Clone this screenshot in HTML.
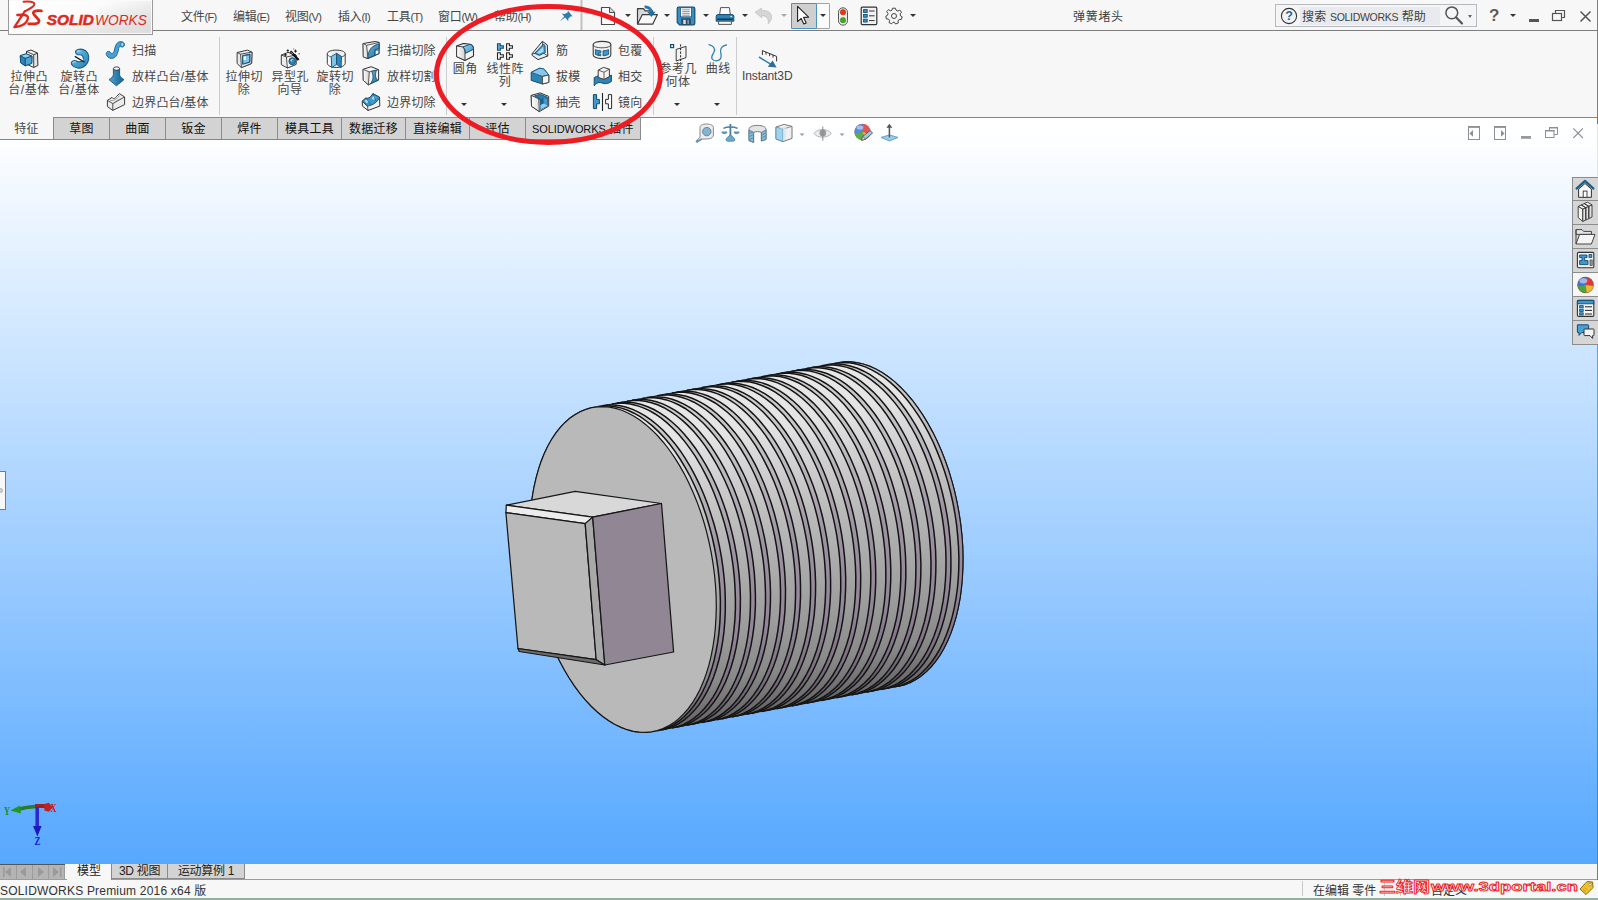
<!DOCTYPE html>
<html lang="zh-CN">
<head>
<meta charset="utf-8">
<title>SOLIDWORKS Premium 2016 x64 版 - 弹簧堵头</title>
<style>
*{box-sizing:border-box;margin:0;padding:0}
html,body{width:1598px;height:900px;overflow:hidden;background:#f7f7f7}
body{position:relative;font-family:"Liberation Sans","Noto Sans CJK SC",sans-serif;font-size:12px;color:#464646;line-height:13px}
.abs{position:absolute}
#menubar{position:absolute;left:0;top:0;width:1598px;height:31px;background:#f7f7f7;border-bottom:1px solid #7d7d7d}
#logo{position:absolute;left:8px;top:-1px;width:145px;height:36px;border:1px solid #9a9a9a;background:linear-gradient(160deg,#ffffff 0%,#fbfbfb 45%,#e2e2e2 80%,#dcdcdc 100%);z-index:3;box-shadow:inset 0 0 0 1px #fafafa}
.menu{position:absolute;top:11px;white-space:nowrap;font-size:12px;color:#464646;letter-spacing:-0.3px}
.menu .en{font-size:11px;letter-spacing:-0.6px}
#ribbon{position:absolute;left:0;top:31px;width:1598px;height:87px;background:#f7f7f7}
#ribline{position:absolute;left:53px;top:117px;width:1545px;height:1px;background:#858585}
.sep{position:absolute;top:37px;width:1px;height:78px;background:#cdcdcd}
.lbl{position:absolute;white-space:nowrap;color:#464646;font-size:12px;letter-spacing:.2px;margin-top:2px}
.big{position:absolute;text-align:center;color:#464646;font-size:12px;line-height:13px;letter-spacing:.5px;margin-top:1px;text-indent:.5px}
.dd{position:absolute;width:0;height:0;border-left:3px solid transparent;border-right:3px solid transparent;border-top:3px solid #333}
#tabs{position:absolute;left:0;top:117px;height:23px;width:641px;border-bottom:1px solid #858585}
.tab{position:absolute;top:0;height:22px;background:#d3d3d3;border-left:1px solid #8a8a8a;border-top:1px solid #8a8a8a;color:#111;text-align:center;line-height:22px;padding-top:0;font-size:12px;white-space:nowrap;letter-spacing:.3px}
.tab.act{background:#f7f7f7;border:none;color:#464646;height:22px;padding-top:1px}
#view{position:absolute;left:0;top:118px;width:1597px;height:746px;background:linear-gradient(180deg,#ffffff 0%,#fdfeff 3%,#56a8ff 100%)}
#btabs{position:absolute;left:0;top:864px;width:1597px;height:16px;background:#f4f4f4;border-bottom:1px solid #9c9c9c}
#status{position:absolute;left:0;top:880px;width:1598px;height:18px;background:#f7f7f7}
#deskb{position:absolute;left:0;top:898px;width:1598px;height:2px;background:#8fb09c}
</style>
</head>
<body>
<div id="menubar">
 <div id="logo">
  <svg width="143" height="34" viewBox="0 0 143 34" style="position:absolute;left:0;top:0">
   <g fill="none" stroke="#dc2a1e" stroke-linecap="round" stroke-linejoin="round">
    <path d="M14.600 1.700 C19 1.100 25.200 1.400 25.400 4 C25.600 6.600 20.400 9.200 15.800 11.400" stroke-width="2"/>
    <path d="M15.800 11.400 L5.400 27.200 C10.400 26.400 15.600 24.600 17.400 21.800 C18.800 19.600 19.400 17.400 18.400 16.200 C16.800 14.600 12.200 14.600 8.300 15" stroke-width="2.300"/>
    <path d="M32.400 10.800 C28.800 10.400 24.800 11 24.300 12.600 C23.800 14.400 28.400 17.600 29.800 20 C30.800 22 29.600 23.400 26 23.800 C23.600 24 21.200 24 19.600 23.900" stroke-width="2.800"/>
   </g>
   <text x="37.800" y="24.500" font-family="'Liberation Sans',sans-serif" font-size="14.600" font-weight="bold" font-style="italic" fill="#dc2a1e" stroke="#dc2a1e" stroke-width=".5" textLength="47" lengthAdjust="spacingAndGlyphs">SOLID</text>
   <text x="86.100" y="24.500" font-family="'Liberation Sans',sans-serif" font-size="14.600" font-style="italic" fill="#dc2a1e" textLength="51.800" lengthAdjust="spacingAndGlyphs">WORKS</text>
  </svg>
 </div>
 <div class="menu" style="left:181px">文件<span class="en">(F)</span></div>
 <div class="menu" style="left:233px">编辑<span class="en">(E)</span></div>
 <div class="menu" style="left:285px">视图<span class="en">(V)</span></div>
 <div class="menu" style="left:338px">插入<span class="en">(I)</span></div>
 <div class="menu" style="left:387px">工具<span class="en">(T)</span></div>
 <div class="menu" style="left:438px">窗口<span class="en">(W)</span></div>
 <div class="menu" style="left:494px">帮助<span class="en">(H)</span></div>
 <!-- pin -->
 <svg class="abs" style="left:559px;top:9px" width="15" height="15" viewBox="0 0 15 15"><path d="M8.2 1.6 L13.4 6.4 L11.4 6.9 L9.6 9.6 L9.9 12 L6.3 8.8 L1.6 13.2 L5.2 7.8 L2.6 5.2 L5.2 5.4 L7.8 3.6 Z" fill="#2e7eb0" transform="rotate(8 7.5 7.5)"/></svg>
 <!-- grip separator -->
 <div class="abs" style="left:580px;top:0;width:3px;height:30px;background:linear-gradient(90deg,#e9e9e9,#b9b9b9 60%,#f7f7f7)"></div>
 <!-- new -->
 <svg class="abs" style="left:599px;top:6px" width="18" height="20" viewBox="0 0 18 20"><path d="M2.5 1.5 H10.5 L15.5 6.5 V18.5 H2.5 Z" fill="#fdfdfd" stroke="#4a4a4a" stroke-width="1.2" stroke-linejoin="round"/><path d="M10.5 1.5 V6.5 H15.5" fill="#dcdcdc" stroke="#4a4a4a" stroke-width="1"/></svg>
 <div class="dd" style="left:625px;top:14px"></div>
 <!-- open -->
 <svg class="abs" style="left:636px;top:5px" width="23" height="21" viewBox="0 0 23 21"><defs><linearGradient id="go1" x1="0" y1="0" x2="1" y2="1"><stop offset="0" stop-color="#cfcfcf"/><stop offset="1" stop-color="#f4f4f4"/></linearGradient></defs><path d="M1.500 3.600 H7.400 L9.200 5.800 H16.600 V19 H1.500 Z" fill="url(#go1)" stroke="#3c3c3c" stroke-width="1.200" stroke-linejoin="round"/><path d="M1.600 19 L6.400 9.600 H21.400 L16.800 19 Z" fill="#f9f9f9" stroke="#3c3c3c" stroke-width="1.200" stroke-linejoin="round"/><path d="M8.600 2 C12.600 1.600 15.400 4 15.400 7.600" fill="none" stroke="#2a79ab" stroke-width="3"/><path d="M11.200 6.800 H19.600 L15.400 12 Z" fill="#256f9e"/></svg>
 <div class="dd" style="left:664px;top:14px"></div>
 <!-- save -->
 <svg class="abs" style="left:676px;top:6px" width="20" height="20" viewBox="0 0 20 20"><path d="M1.200 2.800 Q1.200 1.200 2.800 1.200 H17.200 Q18.800 1.200 18.800 2.800 V17.200 Q18.800 18.800 17.200 18.800 H3.600 L1.200 16.400 Z" fill="#3a8fc2" stroke="#134d73" stroke-width="1.200"/><rect x="4.600" y="1.800" width="10.800" height="9" fill="#ffffff" stroke="#134d73" stroke-width=".7"/><path d="M6.200 3.800 H13.800 M6.200 5.600 H13.800 M6.200 7.400 H13.800 M6.200 9.200 H13.800" stroke="#777" stroke-width=".8"/><rect x="5.600" y="12.800" width="9" height="5.800" fill="#3a4a55" stroke="#134d73" stroke-width=".6"/><rect x="7.200" y="13.800" width="2.600" height="4.200" fill="#d5dde2"/><rect x="11.400" y="13.800" width="1.600" height="4.200" fill="#8a98a2"/></svg>
 <div class="dd" style="left:703px;top:14px"></div>
 <!-- print -->
 <svg class="abs" style="left:715px;top:6px" width="20" height="20" viewBox="0 0 20 20"><path d="M4.6 9 L5.6 1.6 H14.4 L15.4 9 Z" fill="#fbfbfb" stroke="#555" stroke-width="1"/><path d="M1.2 10.4 Q1.2 8.6 3 8.6 H17 Q18.8 8.6 18.8 10.4 V15.2 H1.2 Z" fill="#2f83b5" stroke="#134d73" stroke-width="1"/><rect x="2.2" y="12.4" width="15.6" height="1.6" fill="#0f4060"/><circle cx="16.2" cy="10.6" r=".8" fill="#eaf6ff"/><path d="M3.6 15.2 H16.4 V18.4 H3.6 Z" fill="#f6f6f6" stroke="#555" stroke-width="1"/></svg>
 <div class="dd" style="left:742px;top:14px"></div>
 <!-- undo (disabled) -->
 <svg class="abs" style="left:754px;top:7px" width="20" height="18" viewBox="0 0 20 18"><path d="M1 5.2 L7.4 1.2 L7.4 3.6 C13.6 2.6 18.6 6.4 17.4 11.6 C16.8 14 15.6 15.6 14 16.8 C15 13.4 14.4 9.4 7.6 8.4 L7.8 10.8 Z" fill="#d6d6d6" stroke="#c2c2c2" stroke-width=".8" stroke-linejoin="round"/></svg>
 <div class="dd" style="left:781px;top:14px;border-top-color:#a8a8a8"></div>
 <!-- select -->
 <div class="abs" style="left:791px;top:3px;width:39px;height:26px;border:1px solid #9fa4a8;background:#fbfbfb;border-radius:1px"></div>
 <div class="abs" style="left:791px;top:3px;width:26px;height:26px;border:1px solid #4b92c4;background:#cfcfcf;border-radius:1px"></div>
 <svg class="abs" style="left:796px;top:5px" width="15" height="21" viewBox="0 0 15 21"><path d="M1.6 1.4 L1.6 16.6 L5.2 13.4 L7.8 19 L10.2 17.9 L7.6 12.4 L12.6 12.2 Z" fill="#fff" stroke="#222" stroke-width="1.1" stroke-linejoin="round"/></svg>
 <div class="dd" style="left:820px;top:14px"></div>
 <!-- traffic light -->
 <svg class="abs" style="left:837px;top:7px" width="12" height="19" viewBox="0 0 12 19"><rect x="1.500" y=".8" width="9" height="17.400" rx="4.500" fill="#ececec" stroke="#555" stroke-width="1"/><circle cx="6" cy="5.200" r="2.700" fill="#f03410" stroke="#b02408" stroke-width=".5"/><circle cx="6" cy="13.200" r="2.700" fill="#3fae1c" stroke="#2a7a10" stroke-width=".5"/></svg>
 <!-- options list -->
 <svg class="abs" style="left:860px;top:6px" width="18" height="20" viewBox="0 0 18 20"><rect x="1.2" y="1.2" width="15.6" height="17.4" rx="1" fill="#f2f2f2" stroke="#333" stroke-width="1.2"/><g fill="#3b91c6" stroke="#134d73" stroke-width=".9"><rect x="3.6" y="3.6" width="3.6" height="2.8"/><rect x="3.6" y="8.4" width="3.6" height="2.8"/><rect x="3.6" y="13.2" width="3.6" height="2.8"/></g><path d="M9 5 H14.6 M9 9.8 H14.6 M9 14.6 H14.6" stroke="#333" stroke-width="1"/></svg>
 <!-- gear -->
 <svg class="abs" style="left:885px;top:7px" width="18" height="18" viewBox="-9 -9 18 18"><path id="gearp" d="M-1.5 -7.8 H1.5 L2 -5.8 L3.9 -4.9 L5.7 -6 L7.6 -3.6 L6.1 -2.2 L6.5 -0.2 L8.2 0.8 L7.2 3.6 L5.2 3.4 L3.9 5 L4.4 6.9 L1.6 8 L0.4 6.3 H-1 L-2.4 7.8 L-5 6.6 L-4.4 4.6 L-5.6 3 L-7.6 3 L-8.2 0.2 L-6.4 -0.8 L-6 -2.6 L-7.4 -4.2 L-5.4 -6.4 L-3.7 -5.2 L-2 -5.9 Z" fill="#f4f4f4" stroke="#444" stroke-width="1" stroke-linejoin="round"/><circle r="2.5" fill="#f7f7f7" stroke="#444" stroke-width="1"/></svg>
 <div class="dd" style="left:910px;top:14px"></div>
 <div class="abs" style="left:1073px;top:11px;white-space:nowrap;color:#3f3f3f;font-size:12px;letter-spacing:.7px">弹簧堵头</div>
 <!-- search -->
 <div class="abs" style="left:1275px;top:4px;width:202px;height:23px;border:1px solid #b5b9c0;background:#f5f5f6"></div>
 <div class="abs" style="left:1300px;top:7px;width:140px;height:18px;background:#e9eaee"></div>
 <svg class="abs" style="left:1280px;top:7px" width="18" height="18" viewBox="0 0 18 18"><circle cx="9" cy="9" r="7.6" fill="#f3f3f3" stroke="#333" stroke-width="1.1"/><text x="9" y="13.4" text-anchor="middle" font-family="'Liberation Sans',sans-serif" font-weight="bold" font-size="12.5" fill="#1b6a9c">?</text></svg>
 <div class="abs" style="left:1302px;top:11px;white-space:nowrap;color:#3f3f3f;font-size:12px;letter-spacing:.2px">搜索 <span style="font-size:10.500px;letter-spacing:-.3px">SOLIDWORKS</span> 帮助</div>
 <svg class="abs" style="left:1444px;top:5px" width="20" height="20" viewBox="0 0 20 20"><circle cx="7.8" cy="7.8" r="5.9" fill="none" stroke="#555" stroke-width="1.5"/><path d="M12.2 12.4 L18 18.4" stroke="#555" stroke-width="2.2" stroke-linecap="round"/></svg>
 <div class="dd" style="left:1468px;top:15px;border-top-color:#666;border-left-width:2.5px;border-right-width:2.5px"></div>
 <div class="abs" style="left:1489px;top:6px;font-size:17px;line-height:20px;font-weight:bold;color:#5c5c5c;font-family:'Liberation Sans',sans-serif">?</div>
 <div class="dd" style="left:1510px;top:14px"></div>
 <div class="abs" style="left:1529px;top:19px;width:10px;height:3px;background:#555"></div>
 <svg class="abs" style="left:1551px;top:9px" width="15" height="13" viewBox="0 0 15 13"><path d="M4.5 4 V1.5 H13.5 V8.5 H10.5" fill="none" stroke="#555" stroke-width="1.2"/><rect x="1.5" y="4.5" width="9" height="7" fill="none" stroke="#555" stroke-width="1.2"/></svg>
 <svg class="abs" style="left:1579px;top:10px" width="13" height="13" viewBox="0 0 13 13"><path d="M1.5 1.5 L11.5 11.5 M11.5 1.5 L1.5 11.5" stroke="#555" stroke-width="1.5"/></svg>
</div>
<div id="ribbon"></div><div id="ribline"></div>
<!-- big buttons group 1 -->
<svg class="abs" style="left:19px;top:49px" width="20" height="20" viewBox="0 0 20 20">
 <defs><linearGradient id="ge1" x1="0" y1="0" x2="1" y2="0"><stop offset="0" stop-color="#ffffff"/><stop offset="1" stop-color="#dcdcdc"/></linearGradient></defs>
 <path d="M7.500 2.400 L12 1 L18.500 4.100 L18.900 16.500 L14.700 18.500 L7.500 15 Z" fill="url(#ge1)" stroke="#333" stroke-width="1" stroke-linejoin="round"/>
 <path d="M7.500 2.400 L14.700 5.800 L18.500 4.100 M14.700 5.800 V18.500" fill="none" stroke="#333" stroke-width=".9"/>
 <path d="M1.300 6.700 L7.200 4.800 L13 7.200 L12.700 14.400 L6.100 16.800 L1.600 13.700 Z" fill="#3f97cb" stroke="#134d73" stroke-width="1" stroke-linejoin="round"/>
 <path d="M1.300 6.700 L7.200 4.800 L13 7.200 L6.100 9.400 Z" fill="#8fd0ee" stroke="#134d73" stroke-width=".8" stroke-linejoin="round"/>
 <path d="M6.100 9.400 L13 7.200 L12.700 14.400 L6.100 16.800 Z" fill="#4ea3d3" stroke="#134d73" stroke-width=".8" stroke-linejoin="round"/>
 <path d="M1.300 6.700 L6.100 9.400 L6.100 16.800 L1.600 13.700 Z" fill="#2f83b5" stroke="#134d73" stroke-width=".8" stroke-linejoin="round"/>
</svg>
<div class="big" style="left:4px;top:70px;width:50px">拉伸凸<br>台/基体</div>
<svg class="abs" style="left:69px;top:48px" width="22" height="22" viewBox="0 0 22 22">
 <defs><linearGradient id="gr1" x1="0" y1="0" x2="1" y2="1"><stop offset="0" stop-color="#86cbec"/><stop offset=".5" stop-color="#4aa3d3"/><stop offset="1" stop-color="#2676a8"/></linearGradient></defs>
 <path d="M7 2.600 C9 .8 13.600 .4 16.600 2.800 C20 5.600 20.800 10.800 18.400 15 C16 19.200 11.400 21.200 7 19.600 C4 18.600 1.800 16.400 2.400 14.600 C3 12.800 5.600 12 7.400 13 C9.400 14.200 12.200 14.200 13.400 12.200 C14.600 10.200 14 8 12.400 7 C10.800 6.200 9.600 7.200 8.200 6.400 C6.600 5.600 6 3.800 7 2.600 Z" fill="url(#gr1)" stroke="#1b5d88" stroke-width="1.100"/>
 <path d="M8.600 8 L14.400 11 L13.600 12.800 L7.600 9.600 Z" fill="#f4f9fc"/>
 <path d="M5.800 8.400 L15.600 14.200" stroke="#1c1c1c" stroke-width="1.300"/>
 <path d="M3.400 14.800 C4.400 13.600 6 13.600 7 14.400" fill="none" stroke="#bfe6f7" stroke-width=".9"/>
 <path d="M8 3.400 C9 2.600 10.400 2.600 11.400 3.400" fill="none" stroke="#c9ebf9" stroke-width=".9"/>
</svg>
<div class="big" style="left:54px;top:70px;width:50px">旋转凸<br>台/基体</div>
<!-- small column 1 -->
<svg class="abs" style="left:105px;top:40px" width="21" height="20" viewBox="0 0 21 20">
 <path d="M1.6 12.4 C2.6 11 4.6 11 5.6 12.6 C6.6 14.2 8.6 13.4 9.2 11 C10 7.6 10.6 3.6 13.4 2.2 C15.4 1.2 18.2 1.6 19.2 3.4 C20 5 19 7 17.2 7 C15.6 7 15 5.8 14.4 6.6 C13.2 8.4 13.4 13 11 16.2 C9 18.8 5.2 19 3 17 C1.4 15.6 0.8 13.6 1.6 12.4 Z" fill="#4aa0d0" stroke="#1b6a9c" stroke-width="1"/>
 <ellipse cx="17.3" cy="4.4" rx="1.7" ry="2.2" fill="#9bd7f2" stroke="#1b6a9c" stroke-width=".8"/>
</svg>
<div class="lbl" style="left:132px;top:43px">扫描</div>
<svg class="abs" style="left:108px;top:66px" width="17" height="21" viewBox="0 0 17 21">
 <defs><linearGradient id="gl1" x1="0" y1="0" x2="1" y2="0"><stop offset="0" stop-color="#5ba7d1"/><stop offset=".5" stop-color="#2f7fae"/><stop offset="1" stop-color="#1d608c"/></linearGradient></defs>
 <path d="M5.400 2.600 V8.600 C5.400 10.800 3 12.600 1 13.600 L8.400 19.800 L16 13.600 C14 12.600 11.600 10.800 11.600 8.600 V2.600 Z" fill="url(#gl1)" stroke="#1b5d88" stroke-width="1" stroke-linejoin="round"/>
 <ellipse cx="8.500" cy="2.600" rx="3.100" ry="1.700" fill="#f2f8fb" stroke="#333" stroke-width=".9"/>
</svg>
<div class="lbl" style="left:132px;top:69px">放样凸台/基体</div>
<svg class="abs" style="left:106px;top:92px" width="20" height="20" viewBox="0 0 20 20">
 <path d="M1.4 8.4 L6 5.4 C7 7 9 7 10.4 4.6 L13.4 1.6 L18.6 5 V12.6 L6.8 18.4 L1.4 14.6 Z" fill="#ececec" stroke="#3c3c3c" stroke-width="1" stroke-linejoin="round"/>
 <path d="M1.4 8.4 L6.8 11.6 L18.6 5 M6.8 11.6 V18.4" fill="none" stroke="#3c3c3c" stroke-width=".9"/>
 <path d="M4 8.2 C7 9.4 11 7.2 13.6 3.6 M9 10.2 C10.4 8.6 12.6 7.6 15.6 6.6" fill="none" stroke="#8a8a8a" stroke-width=".8"/>
</svg>
<div class="lbl" style="left:132px;top:95px">边界凸台/基体</div>
<div class="sep" style="left:219px"></div>
<!-- group 2 big -->
<svg class="abs" style="left:236px;top:49px" width="18" height="20" viewBox="0 0 18 20">
 <defs><linearGradient id="gc1" x1="0" y1="0" x2="1" y2="1"><stop offset="0" stop-color="#ffffff"/><stop offset="1" stop-color="#d6d6d6"/></linearGradient></defs>
 <path d="M1.100 3.500 L11.500 1.100 L16 3.100 L15.600 14.500 L5.400 18.600 L1.100 14.500 Z" fill="#e9e9e9" stroke="#3c3c3c" stroke-width="1" stroke-linejoin="round"/>
 <path d="M4.600 5.200 L16 3.100 L15.600 14.500 L5.400 18.600 Z" fill="url(#gc1)" stroke="#3c3c3c" stroke-width=".9" stroke-linejoin="round"/>
 <path d="M1.100 3.500 L4.600 5.200" stroke="#3c3c3c" stroke-width=".9"/>
 <path d="M6.400 6.600 L14.100 5 L14 13.200 L6.600 15.300 Z" fill="#2f83b5" stroke="#134d73" stroke-width=".9" stroke-linejoin="round"/>
 <path d="M7.400 7.600 L10.400 7 V11 L7.500 11.800 Z" fill="#f2f8fb"/>
 <path d="M7.500 11.800 L10.400 11 V7 L13 6.400 V12.600 L7.600 14.200 Z" fill="#86c6e6"/>
</svg>
<div class="big" style="left:219px;top:70px;width:50px">拉伸切<br>除</div>
<svg class="abs" style="left:280px;top:48px" width="21" height="21" viewBox="0 0 21 21">
 <path d="M1.300 7 L8 4.400 L16 7 L16 16.400 L7.400 20 L1.300 16.600 Z" fill="#ededed" stroke="#3c3c3c" stroke-width="1" stroke-linejoin="round"/>
 <path d="M6.400 9 L16 7 L16 16.400 L7.400 20 Z" fill="#f6f6f6" stroke="#3c3c3c" stroke-width=".9" stroke-linejoin="round"/>
 <path d="M1.300 7 L6.400 9" stroke="#3c3c3c" stroke-width=".9"/>
 <ellipse cx="12.200" cy="13.200" rx="3.300" ry="3.500" fill="#2f83b5" stroke="#134d73" stroke-width=".9"/><path d="M10.400 12.400 C11 11 12.800 10.800 13.800 11.600 C12.600 11.800 11.600 12.600 11.400 14 Z" fill="#bfe3f5"/>
 <path d="M10.400 3.400 L18.600 12" stroke="#111" stroke-width="2.400"/><path d="M11.200 4.400 L12.600 5.800" stroke="#fff" stroke-width=".9"/>
 <path d="M5.400 5.400 v3 M3.900 6.900 h3 M7.800 1.400 v2.400 M6.600 2.600 h2.400 M15.500 1.600 v3 M14 3.100 h3 M18.600 5.800 h1.200 M13.400 1 h.8" stroke="#111" stroke-width=".9"/>
</svg>
<div class="big" style="left:265px;top:70px;width:50px">异型孔<br>向导</div>
<svg class="abs" style="left:326px;top:49px" width="21" height="20" viewBox="0 0 21 20">
 <defs><linearGradient id="gv1" x1="0" y1="0" x2="1" y2="0"><stop offset="0" stop-color="#ffffff"/><stop offset=".5" stop-color="#e6e6e6"/><stop offset="1" stop-color="#fafafa"/></linearGradient></defs>
 <path d="M1.300 4.800 C1.300 2.600 5.200 1.100 10.200 1.100 C15.200 1.100 19.200 2.600 19.200 4.800 V14.400 C19.200 16.400 15.600 18.400 10.200 18.600 C5 18.400 1.300 16.400 1.300 14.400 Z" fill="url(#gv1)" stroke="#3c3c3c" stroke-width="1"/>
 <path d="M1.300 4.800 C1.300 6.400 3 7.400 5.300 8 M19.200 4.800 C19.200 6.400 17.600 7.400 15.500 8" fill="none" stroke="#3c3c3c" stroke-width=".8"/>
 <path d="M5.300 7.400 L10.600 4.400 L10.600 15.300 L5.700 18.800 Z" fill="#7fc4e6" stroke="#134d73" stroke-width=".9" stroke-linejoin="round"/>
 <path d="M10.600 4.400 L15.500 7.400 L15.100 18.800 L10.600 15.300 Z" fill="#3388ba" stroke="#134d73" stroke-width=".9" stroke-linejoin="round"/>
</svg>
<div class="big" style="left:310px;top:70px;width:50px">旋转切<br>除</div>
<!-- small column 2 -->
<svg class="abs" style="left:362px;top:40px" width="19" height="20" viewBox="0 0 19 20">
 <defs><linearGradient id="gs2" x1="0" y1="0" x2="1" y2="1"><stop offset="0" stop-color="#6fb6dc"/><stop offset="1" stop-color="#1f6b98"/></linearGradient><linearGradient id="gw2" x1="0" y1="0" x2="1" y2="0"><stop offset="0" stop-color="#ffffff"/><stop offset="1" stop-color="#cfcfcf"/></linearGradient></defs>
 <path d="M1.100 3.500 L13.100 1.500 L17.200 2.400 L17.100 13.700 L6 18.600 L1.300 16.900 Z" fill="#f4f4f4" stroke="#333" stroke-width="1" stroke-linejoin="round"/>
 <path d="M1.100 3.500 L4.600 5.300 L6 18.600 L1.300 16.900 Z" fill="url(#gw2)" stroke="#333" stroke-width=".8" stroke-linejoin="round"/>
 <path d="M4.600 5.300 L17.200 2.400" stroke="#333" stroke-width=".8"/>
 <path d="M6 18.200 C5.800 11 9.400 5.400 17.200 3.800 V8.800 L13 9.600 V15.400 Z" fill="url(#gs2)" stroke="#134d73" stroke-width=".9" stroke-linejoin="round"/>
 <path d="M13.200 10.600 L16.800 9.800 V13.600 L13.200 15 Z" fill="#f2f2f2" stroke="#134d73" stroke-width=".8" stroke-linejoin="round"/>
</svg>
<div class="lbl" style="left:387px;top:43px">扫描切除</div>
<svg class="abs" style="left:362px;top:66px" width="19" height="20" viewBox="0 0 19 20">
 <path d="M1.100 3.300 L9.100 .7 L16.600 3.700 L16.600 13.900 L6.400 18.800 L1.300 14.400 Z" fill="#f4f4f4" stroke="#333" stroke-width="1" stroke-linejoin="round"/>
 <path d="M1.100 3.300 L7.300 5.900 L6.400 18.800 L1.300 14.400 Z" fill="url(#gw2)" stroke="#333" stroke-width=".8" stroke-linejoin="round"/>
 <path d="M7.300 5.900 L16.600 3.700" stroke="#333" stroke-width=".8"/>
 <path d="M9.500 5.300 L14.400 4.200 C13.400 7 13.200 10 14 12 C14.600 13.400 15.600 14 16.400 14.200 L8.600 17.600 C9.800 16 10.800 14 11 11.600 C11.200 9.400 10.600 7 9.500 5.300 Z" fill="url(#gs2)" stroke="#134d73" stroke-width=".9" stroke-linejoin="round"/>
</svg>
<div class="lbl" style="left:387px;top:69px">放样切割</div>
<svg class="abs" style="left:361px;top:92px" width="21" height="20" viewBox="0 0 21 20">
 <path d="M1.200 9.200 L4.800 6.100 C7.200 7 9.600 5.600 11.900 1.700 L18.500 5.200 L18.800 14.100 L7 18.500 L1.400 14.100 Z" fill="#f0f0f0" stroke="#333" stroke-width="1" stroke-linejoin="round"/>
 <path d="M1.200 9.200 L4.800 6.100 C7.200 7 9.600 5.600 11.900 1.700 L18.500 5.200 C17 9.600 12 13.400 6.500 14.100 Z" fill="#3f97cb" stroke="#134d73" stroke-width=".9" stroke-linejoin="round"/>
 <path d="M3.400 8.800 L5.600 7.400 L8 9.600 L5.800 11.200 Z M12.200 3.800 L14.600 5 L13 8 L10.600 6.800 Z" fill="#a8def5"/>
 <path d="M4.800 6.100 L10 12.800 M11.900 1.700 L15.400 9.700" stroke="#134d73" stroke-width=".6" fill="none"/>
 <path d="M1.200 9.200 L6.500 14.100 L7 18.500" fill="none" stroke="#333" stroke-width=".8"/>
</svg>
<div class="lbl" style="left:387px;top:95px">边界切除</div>
<div class="sep" style="left:446px"></div>
<!-- fillet -->
<svg class="abs" style="left:456px;top:43px" width="19" height="19" viewBox="0 0 19 19">
 <defs><linearGradient id="gf1" x1="0" y1="0" x2="1" y2="0"><stop offset="0" stop-color="#fdfdfd"/><stop offset="1" stop-color="#d2d2d2"/></linearGradient><linearGradient id="gf2" x1="0" y1="0" x2="1" y2="1"><stop offset="0" stop-color="#9bd4ee"/><stop offset="1" stop-color="#3f93c4"/></linearGradient></defs>
 <path d="M.6 3 L7.5 .4 L14 1.300 C16.400 2 17.500 3.800 17.500 6 V13 L9 17.500 L.6 13.500 Z" fill="#f4f4f4" stroke="#333" stroke-width="1.100" stroke-linejoin="round"/>
 <path d="M.6 3 L7 3.900 C8.400 5.600 9 8 9 10.500 V17.500 L.6 13.500 Z" fill="url(#gf1)" stroke="#333" stroke-width=".9" stroke-linejoin="round"/>
 <path d="M7 3.900 L14 1.300 C16.400 2 17.500 3.800 17.500 6.200 L9.600 10.300 C9.400 7.600 8.600 5.400 7 3.900 Z" fill="url(#gf2)" stroke="#134d73" stroke-width="1" stroke-linejoin="round"/>
</svg>
<div class="big" style="left:440px;top:62px;width:50px">圆角</div>
<div class="dd" style="left:461px;top:103px"></div>
<!-- linear pattern -->
<svg class="abs" style="left:496px;top:42px" width="18" height="19" viewBox="0 0 18 19">
 <path d="M1.500 1.700 H4.300 V3.700 H7.300 V6.300 H4.300 V8.300 H1.500 Z" fill="#5fb0da" stroke="#134d73" stroke-width="1.100"/>
 <path d="M10.600 1.700 H13.400 V3.700 H16.400 V6.300 H13.400 V8.300 H10.600 Z M1.500 10.700 H4.300 V12.700 H7.300 V15.300 H4.300 V17.300 H1.500 Z M10.600 10.700 H13.400 V12.700 H16.400 V15.300 H13.400 V17.300 H10.600 Z" fill="#fdfdfd" stroke="#222" stroke-width="1.100"/>
</svg>
<div class="big" style="left:480px;top:62px;width:50px">线性阵<br>列</div>
<div class="dd" style="left:501px;top:103px"></div>
<!-- rib -->
<svg class="abs" style="left:531px;top:40px" width="18" height="21" viewBox="0 0 18 21">
 <path d="M1 13.800 L11.400 1.300 L16.300 4.900 L16.800 16 L7 19.600 L1.200 15.400 Z" fill="#ececec" stroke="#333" stroke-width="1" stroke-linejoin="round"/>
 <path d="M11.400 1.300 L11.800 12.600 L16.800 16 M11.800 12.600 L1 13.800" fill="none" stroke="#333" stroke-width=".8"/>
 <path d="M12.400 4.200 L14 5.400 L14.200 12.600 L8.400 15.400 L3.600 13.400 Z" fill="#3f97cb" stroke="#134d73" stroke-width=".9" stroke-linejoin="round"/>
 <path d="M12.200 6.800 L12.600 11.800 L8.200 13.800 L5.800 12.900 Z" fill="#a8def5"/>
</svg>
<div class="lbl" style="left:556px;top:43px">筋</div>
<!-- draft -->
<svg class="abs" style="left:530px;top:67px" width="20" height="18" viewBox="0 0 20 18">
 <path d="M1.2 5.4 L9.6 1.2 L13.8 2 L18.8 8 V15.4 L12.4 17 L1.2 13.4 Z" fill="#2f83b5" stroke="#134d73" stroke-width="1" stroke-linejoin="round"/>
 <path d="M1.2 5.4 L9.6 1.2 L13.8 2 L18.8 8 L12.4 9.4 Z" fill="#86c8ea" stroke="#134d73" stroke-width=".8" stroke-linejoin="round"/>
 <path d="M12.4 9.4 L18.8 8 V15.4 L12.4 17 Z" fill="#f4f4f4" stroke="#3c3c3c" stroke-width=".9" stroke-linejoin="round"/>
</svg>
<div class="lbl" style="left:556px;top:69px">拔模</div>
<!-- shell -->
<svg class="abs" style="left:530px;top:92px" width="20" height="21" viewBox="0 0 20 21">
 <defs><linearGradient id="gh1" x1="0" y1="0" x2="1" y2="0"><stop offset="0" stop-color="#ffffff"/><stop offset="1" stop-color="#dedede"/></linearGradient></defs>
 <path d="M1.200 3.400 L10.200 .9 L18.700 4.400 L18.700 14.200 L9.300 19.600 L1.500 14.200 Z" fill="#fafafa" stroke="#333" stroke-width="1" stroke-linejoin="round"/>
 <path d="M4.600 3.800 L10.200 2.200 L17.400 5.200 L17.400 13.600 L10.600 17.600 L10.200 7.400 Z" fill="#2a79ab" stroke="#134d73" stroke-width=".9" stroke-linejoin="round"/>
 <path d="M10.200 7.400 L13.600 6 L13.800 11.600 L10.500 13 Z" fill="#1f5f88"/><path d="M13.600 6 L17.400 7.600 V13.600 L13.800 11.600 Z" fill="#3f97cb"/>
 <path d="M10.500 13 L13.800 11.600 L17.400 13.600 L10.600 17.600 Z" fill="#8fd0ee"/>
 <path d="M1.200 3.400 L8.800 6.800 L9.300 19.600 L1.500 14.200 Z" fill="url(#gh1)" stroke="#333" stroke-width=".9" stroke-linejoin="round"/>
 <path d="M8.800 6.800 L10.200 7.400" stroke="#333" stroke-width=".8"/>
</svg>
<div class="lbl" style="left:556px;top:95px">抽壳</div>
<!-- wrap -->
<svg class="abs" style="left:592px;top:40px" width="20" height="20" viewBox="0 0 20 20">
 <path d="M1.2 4.6 C1.2 2.6 5 1.4 10 1.4 C15 1.4 18.8 2.6 18.8 4.6 V15 C18.8 17 15 18.6 10 18.6 C5 18.6 1.2 17 1.2 15 Z" fill="#f2f2f2" stroke="#3c3c3c" stroke-width="1.1"/>
 <path d="M1.2 4.6 C1.2 6.6 5 7.8 10 7.8 C15 7.8 18.8 6.6 18.8 4.6" fill="none" stroke="#3c3c3c" stroke-width=".9"/>
 <path d="M3.4 9.6 C5 10.4 7 10.8 8.8 10.8 V13 H6.4 V14.2 H8.8 V15.8 C7 15.8 5 15.2 3.4 14.4 Z M11 10.8 C13 10.8 15 10.4 16.6 9.6 V14.4 C15 15.2 13 15.8 11 15.8 Z" fill="#3f97cb" stroke="#134d73" stroke-width=".8"/>
</svg>
<div class="lbl" style="left:618px;top:43px">包覆</div>
<!-- intersect -->
<svg class="abs" style="left:592px;top:66px" width="21" height="21" viewBox="0 0 21 21">
 <path d="M2.2 11.6 C5 9.6 8 9.6 10 10.6 C13 12 16.4 11.4 19.4 9 V15.4 C16.4 17.8 13 18.2 10 17 C7.6 16 5 16.4 3.4 18.6 L2.2 19.8 Z" fill="#2f83b5" stroke="#134d73" stroke-width="1" stroke-linejoin="round"/>
 <path d="M6.2 4.2 L11.4 1.4 L17.4 3.2 V10.6 L12 13.4 L6.2 11.4 Z" fill="#f3f3f3" stroke="#3c3c3c" stroke-width="1" stroke-linejoin="round"/>
 <path d="M6.2 4.2 L12 6.2 L17.4 3.2 M12 6.2 V13.4" fill="none" stroke="#3c3c3c" stroke-width=".8"/>
</svg>
<div class="lbl" style="left:618px;top:69px">相交</div>
<!-- mirror -->
<svg class="abs" style="left:592px;top:93px" width="21" height="18" viewBox="0 0 21 18">
 <path d="M1.4 1.6 H4.6 V6.4 H7.4 V10.8 H4.6 V15.6 H1.4 Z" fill="#3f97cb" stroke="#134d73" stroke-width="1"/>
 <path d="M19.6 1.6 H16.4 V6.4 H13.6 V10.8 H16.4 V15.6 H19.6 Z" fill="#fbfbfb" stroke="#2b2b2b" stroke-width="1"/>
 <path d="M10.5 0 V18" stroke="#222" stroke-width="1.1"/>
</svg>
<div class="lbl" style="left:618px;top:95px">镜向</div>
<div class="sep" style="left:653px"></div>
<!-- reference geometry -->
<svg class="abs" style="left:669px;top:42.500px" width="20" height="22" viewBox="0 0 20 22">
 <rect x="1.6" y="1.6" width="3" height="3" fill="#eaf6ff" stroke="#134d73" stroke-width="1.2"/>
 <path d="M7.2 6.4 L17 3.4 V14.6 L7.2 18 Z" fill="#f3f3f3" stroke="#3c3c3c" stroke-width="1" stroke-linejoin="round"/>
 <path d="M11.6 1.4 V20.6" stroke="#222" stroke-width="1" stroke-dasharray="2.2 1.4"/>
</svg>
<div class="big" style="left:653px;top:62px;width:50px">参考几<br>何体</div>
<div class="dd" style="left:674px;top:103px"></div>
<!-- curves -->
<svg class="abs" style="left:707px;top:43px" width="21" height="21" viewBox="0 0 21 21">
 <path d="M2 1.6 C6.4 2.6 8.6 5.6 7 9 C5.4 12.2 3.6 13.6 5.2 16 C7 18.6 12 18.4 13.6 15.6 C15 13.2 14 11.2 13.6 9 C13 5.6 15.4 2.6 19.4 2" fill="none" stroke="#2f83b5" stroke-width="1.3" stroke-linecap="round"/>
</svg>
<div class="big" style="left:693px;top:62px;width:50px">曲线</div>
<div class="dd" style="left:714px;top:103px"></div>
<div class="sep" style="left:736px"></div>
<!-- instant3d -->
<svg class="abs" style="left:757px;top:48px" width="22" height="22" viewBox="0 0 22 22">
 <path d="M5.4 2.6 L19.6 8.4 M5.4 2.6 V7 M9 4 V6.6 M12.6 5.6 V8.2 M16 7 V9.6 M19.6 8.4 V13.4" fill="none" stroke="#333" stroke-width="1"/>
 <path d="M2 9 L14.4 16.6" stroke="#2f83b5" stroke-width="1.6"/><path d="M19.6 19.6 L10.8 18.8 L15.6 12.6 Z" fill="#2a6f99"/>
</svg>
<div class="lbl" style="left:742px;top:68px;letter-spacing:-.1px;font-size:12px">Instant3D</div>
<div id="view"></div>
<div class="abs" style="left:1597px;top:0;width:1px;height:118px;background:#7d7d7d"></div>
<div class="abs" style="left:1597px;top:118px;width:1px;height:6px;background:#1585f0"></div>
<div class="abs" style="left:1597px;top:124px;width:1px;height:221px;background:#e4e4e4"></div>
<div class="abs" style="left:1597px;top:345px;width:1px;height:535px;background:linear-gradient(180deg,#35b4f4 0%,#35b4f4 40%,#3aaa28 50%,#3aaa28 100%)"></div>
<div id="tabs">
 <div class="tab act" style="left:0;width:53px">特征</div>
 <div class="tab" style="left:53px;width:56px">草图</div>
 <div class="tab" style="left:109px;width:56px">曲面</div>
 <div class="tab" style="left:165px;width:56px">钣金</div>
 <div class="tab" style="left:221px;width:56px">焊件</div>
 <div class="tab" style="left:277px;width:64px">模具工具</div>
 <div class="tab" style="left:341px;width:64px">数据迁移</div>
 <div class="tab" style="left:405px;width:64px">直接编辑</div>
 <div class="tab" style="left:469px;width:56px">评估</div>
 <div class="tab" style="left:525px;width:116px;border-right:1px solid #8a8a8a"><span style="font-size:11px;letter-spacing:-.1px">SOLIDWORKS</span> 插件</div>
</div>
<!-- heads-up view toolbar -->
<svg class="abs" style="left:694px;top:122px" width="210" height="24" viewBox="0 0 210 24">
 <!-- zoom to fit -->
 <g>
  <path d="M6 5.6 C6 3.2 8.6 2 12.4 2 C16.4 2 19.4 3.2 19.4 5.6 V13 C19.4 15.6 16.4 17 12.4 17 H8 L3 20.6 L2 19 L6 15.4 Z" fill="#ececec" stroke="#8a8a8a" stroke-width="1"/>
  <circle cx="12.8" cy="9.6" r="4.2" fill="#86b4cf" stroke="#5b879f" stroke-width="1"/>
  <path d="M2 19.8 L8 17" stroke="#5a9bc2" stroke-width="1.6"/>
 </g>
 <!-- scales -->
 <g transform="translate(27,0)" fill="#6ea9cc" stroke="#4a7f9f" stroke-width=".9">
  <path d="M9.4 2 V14" stroke-width="1.8"/><path d="M2.4 6.4 C6 4.6 12.8 4.6 16.6 6.4" fill="none" stroke-width="1.4"/>
  <path d="M.8 10 H6 C5.6 12.2 1.2 12.2 .8 10 Z M13 10 H18.2 C17.8 12.2 13.4 12.2 13 10 Z"/>
  <path d="M9.4 13 C7 14.6 5 16.4 5 18.2 C5 19.6 13.8 19.6 13.8 18.2 C13.8 16.4 11.8 14.6 9.4 13 Z"/>
 </g>
 <!-- section view -->
 <g transform="translate(54,0)">
  <path d="M1 7.4 C1 5 4 3.4 9.4 3.4 C14.8 3.4 18 5 18 7.4 V17.4 L13.4 19 V10.4 C12 9.4 7 9.4 5.6 10.4 V20.4 L1 18.6 Z" fill="#e4e4e4" stroke="#777" stroke-width="1" stroke-linejoin="round"/>
  <path d="M1 8 L5.6 10.4 V20.4 L1 18.6 Z M13.4 10.4 L18 8 V17.4 L13.4 19 Z" fill="#8bbbd6" stroke="#4f7f9c" stroke-width=".9"/>
  <path d="M1.6 11.6 L5 9.8 M1.6 14.6 L5 12.8 M1.6 17.6 L5 15.8 M14 13 L17.4 11 M14 16 L17.4 14" stroke="#4f7f9c" stroke-width=".8"/>
 </g>
 <!-- display style cube -->
 <g transform="translate(81,0)">
  <path d="M1 5 L9 2.4 L17 4.4 V16.4 L8 19.6 L1 17 Z" fill="#f1f1f1" stroke="#777" stroke-width="1" stroke-linejoin="round"/>
  <path d="M1 5 L8 7 V19.6 L1 17 Z" fill="#9fd3ee" stroke="#5b8fae" stroke-width=".8"/><path d="M8 7 L17 4.4" stroke="#777" stroke-width=".8"/>
  <path d="M4 6 L11 4.2 V17 L8 19.4 V7 Z" fill="#cfe9f7" opacity=".8"/>
 </g>
 <path d="M105.500 11.5 h5 l-2.500 2.600 z" fill="#9a9a9a"/>
 <!-- hide/show eye -->
 <g transform="translate(119,0)">
  <path d="M1 11.4 C4 6.4 14.6 6.4 18.4 11.4 C14.6 16.4 4 16.4 1 11.4 Z" fill="#ededed" stroke="#b5b5b5" stroke-width="1"/>
  <circle cx="9.8" cy="11" r="3.4" fill="#9a9a9a"/><path d="M9.8 4.6 V18.6" stroke="#8a8a8a" stroke-width="1"/>
 </g>
 <path d="M145.500 11.500 h5 l-2.500 2.600 z" fill="#9a9a9a"/>
 <!-- appearance ball -->
 <g transform="translate(159,0)">
  <circle cx="9.600" cy="10" r="8.200" fill="#e05656"/>
  <path d="M9.600 10 L9.600 1.800 A8.200 8.200 0 0 0 1.600 11.600 Z" fill="#4f8fe0"/>
  <path d="M9.600 10 L1.600 11.600 A8.200 8.200 0 0 0 13 17.400 Z" fill="#58b04a"/>
  <path d="M9.600 10 L13 17.400 A8.200 8.200 0 0 0 17.400 12.600 Z" fill="#e8c54a"/>
  <ellipse cx="7" cy="5.600" rx="3.400" ry="2.200" fill="#fff" opacity=".45"/>
  <path d="M8.400 18.200 L9.800 14.400 L17 8.600 L19.600 11 L12.400 17.200 Z" fill="#9cc9e6" stroke="#555" stroke-width=".9" stroke-linejoin="round"/><path d="M8.400 18.200 L9.800 14.400 L12.400 17.200 Z" fill="#f0e0c0" stroke="#555" stroke-width=".7"/>
 </g>
 <!-- view triad -->
 <g transform="translate(186,0)">
  <path d="M1 15.400 L9.400 13 L18 15.400 L9.400 19 Z" fill="#9ccbe6" stroke="#5a9bc2" stroke-width=".9"/>
  <path d="M9.400 15.400 V4" stroke="#555" stroke-width="1.500"/><path d="M6.400 5.800 L9.400 1.800 L12.400 5.800 Z" fill="#555"/>
 </g>
</svg>
<!-- doc window controls -->
<svg class="abs" style="left:1466px;top:126px" width="124" height="15" viewBox="0 0 124 15">
 <g fill="none" stroke="#8f8f8f" stroke-width="1">
  <rect x="2.500" y="1" width="11" height="12.500"/><rect x="28.500" y="1" width="11" height="12.500"/>
  <path d="M83.500 4.500 V1.500 H91.500 V8.500 H88"/><rect x="79.500" y="4.500" width="8.500" height="7"/>
  <path d="M107.300 2.400 L116.900 12 M116.900 2.400 L107.300 12" stroke-width="1.100"/>
 </g>
 <path d="M2 0 H14 V1.800 H2 Z M28 0 H40 V1.800 H28 Z M83 1 H92 V2.400 H83 Z M79 4 H88.500 V5.400 H79 Z" fill="#8f8f8f"/>
 <path d="M3.400 7.400 L7 4 V10.800 Z M38.600 7.400 L35 4 V10.800 Z" fill="#8f8f8f"/>
 <rect x="55" y="10" width="10" height="2.800" fill="#9a9a9a"/>
</svg>
<!-- left panel handle -->
<div class="abs" style="left:-1px;top:471px;width:7px;height:39px;background:#f7f7f7;border:1px solid #7a7a7a"></div>
<div class="abs" style="left:-2px;top:488px;width:5px;height:5px;border-radius:3px;background:#cfcfcf;border:1px solid #b0b0b0"></div>
<svg class="abs" style="left:0;top:0" width="1598" height="900" viewBox="0 0 1598 900">
<defs>
<linearGradient id="gb" gradientUnits="userSpaceOnUse" x1="715.7" y1="385.1" x2="775.6" y2="708.9"><stop offset="0" stop-color="#e8e8e8"/><stop offset=".15" stop-color="#e4e4e4"/><stop offset=".27" stop-color="#d2d2d2"/><stop offset=".45" stop-color="#b9b9b9"/><stop offset=".57" stop-color="#adadad"/><stop offset=".73" stop-color="#9d9d9d"/><stop offset=".88" stop-color="#8a8a8a"/><stop offset="1" stop-color="#666666"/></linearGradient>
<linearGradient id="gp" gradientUnits="userSpaceOnUse" x1="715.7" y1="385.1" x2="775.6" y2="708.9"><stop offset="0" stop-color="#d0d0d0"/><stop offset=".2" stop-color="#c4c2c6"/><stop offset=".36" stop-color="#b2acb5"/><stop offset=".5" stop-color="#9e93a3"/><stop offset=".75" stop-color="#94869a"/><stop offset=".9" stop-color="#7c7082"/><stop offset="1" stop-color="#5c5562"/></linearGradient>
</defs>
<path d="M593.0 407.5 L838.3 362.7 L844.4 361.9 L850.6 361.9 L856.8 362.6 L863.1 364.0 L869.5 366.1 L875.8 369.0 L882.1 372.5 L888.3 376.8 L894.5 381.6 L900.5 387.2 L906.4 393.3 L912.1 400.0 L917.6 407.3 L922.9 415.1 L927.9 423.4 L932.7 432.1 L937.2 441.3 L941.4 450.8 L945.3 460.7 L948.8 470.8 L951.9 481.2 L954.7 491.7 L957.1 502.5 L959.1 513.3 L960.7 524.1 L961.9 535.0 L962.7 545.8 L963.0 556.6 L962.9 567.1 L962.4 577.5 L961.5 587.7 L960.2 597.6 L958.4 607.1 L956.3 616.3 L953.7 625.1 L950.8 633.4 L947.5 641.2 L943.9 648.5 L939.9 655.3 L935.6 661.4 L931.0 667.0 L926.1 671.9 L920.9 676.2 L915.6 679.8 L910.0 682.7 L904.2 684.9 L898.3 686.3 L653.0 731.5 L653.0 731.5 L647.0 732.3 L641.0 732.3 L634.8 731.6 L628.6 730.1 L622.4 727.9 L616.2 725.1 L610.0 721.5 L603.8 717.3 L597.8 712.3 L591.8 706.8 L586.0 700.6 L580.4 693.9 L574.9 686.6 L569.7 678.8 L564.7 670.5 L560.0 661.7 L555.5 652.5 L551.4 643.0 L547.6 633.1 L544.1 623.0 L540.9 612.6 L538.1 602.0 L535.8 591.3 L533.7 580.4 L532.1 569.5 L530.9 558.7 L530.2 547.8 L529.8 537.1 L529.8 526.5 L530.3 516.1 L531.1 506.0 L532.4 496.1 L534.1 486.5 L536.2 477.4 L538.7 468.6 L541.5 460.3 L544.7 452.5 L548.3 445.2 L552.2 438.4 L556.4 432.2 L560.9 426.7 L565.7 421.8 L570.7 417.5 L576.0 414.0 L581.5 411.1 L587.2 408.9 L593.0 407.5 Z" fill="url(#gb)" stroke="#1a1a1a" stroke-width="1.1" stroke-linejoin="round"/>
<path d="M597.1 406.7 L603.1 406.0 L609.2 406.0 L615.3 406.7 L621.5 408.1 L627.8 410.3 L634.0 413.2 L640.2 416.7 L646.3 421.0 L652.4 425.9 L658.3 431.4 L664.1 437.6 L669.8 444.3 L675.2 451.6 L680.4 459.5 L685.4 467.8 L690.2 476.5 L694.6 485.7 L698.8 495.2 L702.6 505.1 L706.1 515.3 L709.2 525.7 L712.0 536.3 L714.4 547.0 L716.4 557.8 L718.0 568.7 L719.2 579.6 L720.0 590.4 L720.4 601.1 L720.3 611.7 L719.9 622.1 L719.0 632.3 L717.7 642.2 L716.0 651.7 L714.0 660.9 L711.5 669.6 L708.6 678.0 L705.4 685.8 L701.9 693.1 L698.0 699.8 L693.7 706.0 L689.2 711.5 L684.4 716.5 L679.4 720.7 L674.1 724.3 L668.6 727.2 L663.0 729.3 L657.1 730.8 L662.1 729.9 L667.9 728.4 L673.6 726.3 L679.0 723.4 L684.3 719.8 L689.4 715.5 L694.2 710.6 L698.7 705.1 L702.9 698.9 L706.8 692.2 L710.4 684.9 L713.6 677.0 L716.4 668.7 L718.9 660.0 L721.0 650.8 L722.7 641.2 L724.0 631.4 L724.8 621.2 L725.3 610.8 L725.3 600.2 L725.0 589.5 L724.2 578.7 L723.0 567.8 L721.4 556.9 L719.4 546.1 L717.0 535.3 L714.2 524.8 L711.0 514.4 L707.6 504.2 L703.7 494.3 L699.6 484.8 L695.1 475.6 L690.4 466.9 L685.4 458.6 L680.2 450.7 L674.7 443.4 L669.1 436.7 L663.3 430.5 L657.3 425.0 L651.3 420.1 L645.1 415.8 L638.9 412.3 L632.7 409.4 L626.5 407.2 L620.2 405.8 L614.1 405.1 L608.0 405.1 L602.0 405.8 Z" fill="url(#gp)" stroke="none"/>
<path d="M597.1 406.7 L603.1 406.0 L609.2 406.0 L615.3 406.7 L621.5 408.1 L627.8 410.3 L634.0 413.2 L640.2 416.7 L646.3 421.0 L652.4 425.9 L658.3 431.4 L664.1 437.6 L669.8 444.3 L675.2 451.6 L680.4 459.5 L685.4 467.8 L690.2 476.5 L694.6 485.7 L698.8 495.2 L702.6 505.1 L706.1 515.3 L709.2 525.7 L712.0 536.3 L714.4 547.0 L716.4 557.8 L718.0 568.7 L719.2 579.6 L720.0 590.4 L720.4 601.1 L720.3 611.7 L719.9 622.1 L719.0 632.3 L717.7 642.2 L716.0 651.7 L714.0 660.9 L711.5 669.6 L708.6 678.0 L705.4 685.8 L701.9 693.1 L698.0 699.8 L693.7 706.0 L689.2 711.5 L684.4 716.5 L679.4 720.7 L674.1 724.3 L668.6 727.2 L663.0 729.3 L657.1 730.8" fill="none" stroke="#141414" stroke-width="1.5"/>
<path d="M602.0 405.8 L608.0 405.1 L614.1 405.1 L620.2 405.8 L626.5 407.2 L632.7 409.4 L638.9 412.3 L645.1 415.8 L651.3 420.1 L657.3 425.0 L663.3 430.5 L669.1 436.7 L674.7 443.4 L680.2 450.7 L685.4 458.6 L690.4 466.9 L695.1 475.6 L699.6 484.8 L703.7 494.3 L707.6 504.2 L711.0 514.4 L714.2 524.8 L717.0 535.3 L719.4 546.1 L721.4 556.9 L723.0 567.8 L724.2 578.7 L725.0 589.5 L725.3 600.2 L725.3 610.8 L724.8 621.2 L724.0 631.4 L722.7 641.2 L721.0 650.8 L718.9 660.0 L716.4 668.7 L713.6 677.0 L710.4 684.9 L706.8 692.2 L702.9 698.9 L698.7 705.1 L694.2 710.6 L689.4 715.5 L684.3 719.8 L679.0 723.4 L673.6 726.3 L667.9 728.4 L662.1 729.9" fill="none" stroke="#141414" stroke-width="1.5"/>
<path d="M612.1 404.0 L618.1 403.2 L624.1 403.2 L630.3 404.0 L636.5 405.4 L642.7 407.6 L649.0 410.4 L655.2 414.0 L661.3 418.2 L667.4 423.1 L673.3 428.7 L679.1 434.8 L684.8 441.6 L690.2 448.9 L695.5 456.7 L700.5 465.0 L705.2 473.8 L709.7 482.9 L713.8 492.5 L717.6 502.4 L721.1 512.5 L724.3 522.9 L727.1 533.5 L729.5 544.2 L731.5 555.1 L733.1 565.9 L734.3 576.8 L735.0 587.6 L735.4 598.4 L735.4 609.0 L734.9 619.4 L734.0 629.5 L732.8 639.4 L731.1 648.9 L729.0 658.1 L726.5 666.9 L723.6 675.2 L720.4 683.0 L716.9 690.3 L713.0 697.1 L708.7 703.2 L704.2 708.8 L699.4 713.7 L694.4 717.9 L689.1 721.5 L683.6 724.4 L677.9 726.6 L672.1 728.0 L677.0 727.1 L682.8 725.7 L688.5 723.5 L694.0 720.6 L699.3 717.0 L704.4 712.8 L709.1 707.9 L713.7 702.3 L717.9 696.2 L721.8 689.4 L725.4 682.1 L728.6 674.3 L731.4 666.0 L733.9 657.2 L736.0 648.0 L737.7 638.5 L739.0 628.6 L739.9 618.4 L740.3 608.0 L740.4 597.5 L740.0 586.7 L739.2 575.9 L738.0 565.0 L736.4 554.1 L734.4 543.3 L732.0 532.6 L729.2 522.0 L726.1 511.6 L722.6 501.5 L718.8 491.6 L714.6 482.0 L710.2 472.9 L705.4 464.1 L700.4 455.8 L695.2 448.0 L689.7 440.7 L684.1 433.9 L678.3 427.8 L672.3 422.2 L666.3 417.3 L660.1 413.1 L653.9 409.5 L647.7 406.7 L641.4 404.5 L635.2 403.1 L629.1 402.3 L623.0 402.3 L617.0 403.1 Z" fill="url(#gp)" stroke="none"/>
<path d="M612.1 404.0 L618.1 403.2 L624.1 403.2 L630.3 404.0 L636.5 405.4 L642.7 407.6 L649.0 410.4 L655.2 414.0 L661.3 418.2 L667.4 423.1 L673.3 428.7 L679.1 434.8 L684.8 441.6 L690.2 448.9 L695.5 456.7 L700.5 465.0 L705.2 473.8 L709.7 482.9 L713.8 492.5 L717.6 502.4 L721.1 512.5 L724.3 522.9 L727.1 533.5 L729.5 544.2 L731.5 555.1 L733.1 565.9 L734.3 576.8 L735.0 587.6 L735.4 598.4 L735.4 609.0 L734.9 619.4 L734.0 629.5 L732.8 639.4 L731.1 648.9 L729.0 658.1 L726.5 666.9 L723.6 675.2 L720.4 683.0 L716.9 690.3 L713.0 697.1 L708.7 703.2 L704.2 708.8 L699.4 713.7 L694.4 717.9 L689.1 721.5 L683.6 724.4 L677.9 726.6 L672.1 728.0" fill="none" stroke="#141414" stroke-width="1.5"/>
<path d="M617.0 403.1 L623.0 402.3 L629.1 402.3 L635.2 403.1 L641.4 404.5 L647.7 406.7 L653.9 409.5 L660.1 413.1 L666.3 417.3 L672.3 422.2 L678.3 427.8 L684.1 433.9 L689.7 440.7 L695.2 448.0 L700.4 455.8 L705.4 464.1 L710.2 472.9 L714.6 482.0 L718.8 491.6 L722.6 501.5 L726.1 511.6 L729.2 522.0 L732.0 532.6 L734.4 543.3 L736.4 554.1 L738.0 565.0 L739.2 575.9 L740.0 586.7 L740.4 597.5 L740.3 608.0 L739.9 618.4 L739.0 628.6 L737.7 638.5 L736.0 648.0 L733.9 657.2 L731.4 666.0 L728.6 674.3 L725.4 682.1 L721.8 689.4 L717.9 696.2 L713.7 702.3 L709.1 707.9 L704.4 712.8 L699.3 717.0 L694.0 720.6 L688.5 723.5 L682.8 725.7 L677.0 727.1" fill="none" stroke="#141414" stroke-width="1.5"/>
<path d="M627.0 401.2 L633.0 400.5 L639.1 400.5 L645.3 401.2 L651.5 402.7 L657.7 404.8 L664.0 407.7 L670.2 411.3 L676.3 415.5 L682.4 420.4 L688.3 425.9 L694.2 432.1 L699.8 438.8 L705.3 446.1 L710.5 454.0 L715.5 462.3 L720.2 471.0 L724.7 480.2 L728.9 489.7 L732.7 499.6 L736.2 509.8 L739.3 520.1 L742.1 530.7 L744.5 541.5 L746.5 552.3 L748.1 563.2 L749.3 574.0 L750.1 584.9 L750.5 595.6 L750.4 606.2 L750.0 616.6 L749.1 626.7 L747.8 636.6 L746.1 646.2 L744.0 655.3 L741.5 664.1 L738.7 672.4 L735.4 680.3 L731.9 687.6 L728.0 694.3 L723.7 700.5 L719.2 706.0 L714.4 710.9 L709.3 715.2 L704.1 718.8 L698.6 721.6 L692.9 723.8 L687.0 725.3 L691.9 724.4 L697.8 722.9 L703.5 720.7 L709.0 717.9 L714.3 714.3 L719.3 710.0 L724.1 705.1 L728.7 699.6 L732.9 693.4 L736.8 686.6 L740.4 679.3 L743.6 671.5 L746.5 663.2 L748.9 654.4 L751.0 645.3 L752.7 635.7 L754.0 625.8 L754.9 615.7 L755.4 605.3 L755.4 594.7 L755.0 584.0 L754.3 573.1 L753.1 562.3 L751.5 551.4 L749.4 540.6 L747.1 529.8 L744.3 519.2 L741.1 508.8 L737.6 498.7 L733.8 488.8 L729.6 479.3 L725.2 470.1 L720.4 461.4 L715.4 453.1 L710.2 445.2 L704.7 437.9 L699.1 431.2 L693.3 425.0 L687.3 419.5 L681.3 414.6 L675.1 410.4 L668.9 406.8 L662.7 403.9 L656.4 401.8 L650.2 400.3 L644.0 399.6 L637.9 399.6 L632.0 400.3 Z" fill="url(#gp)" stroke="none"/>
<path d="M627.0 401.2 L633.0 400.5 L639.1 400.5 L645.3 401.2 L651.5 402.7 L657.7 404.8 L664.0 407.7 L670.2 411.3 L676.3 415.5 L682.4 420.4 L688.3 425.9 L694.2 432.1 L699.8 438.8 L705.3 446.1 L710.5 454.0 L715.5 462.3 L720.2 471.0 L724.7 480.2 L728.9 489.7 L732.7 499.6 L736.2 509.8 L739.3 520.1 L742.1 530.7 L744.5 541.5 L746.5 552.3 L748.1 563.2 L749.3 574.0 L750.1 584.9 L750.5 595.6 L750.4 606.2 L750.0 616.6 L749.1 626.7 L747.8 636.6 L746.1 646.2 L744.0 655.3 L741.5 664.1 L738.7 672.4 L735.4 680.3 L731.9 687.6 L728.0 694.3 L723.7 700.5 L719.2 706.0 L714.4 710.9 L709.3 715.2 L704.1 718.8 L698.6 721.6 L692.9 723.8 L687.0 725.3" fill="none" stroke="#141414" stroke-width="1.5"/>
<path d="M632.0 400.3 L637.9 399.6 L644.0 399.6 L650.2 400.3 L656.4 401.8 L662.7 403.9 L668.9 406.8 L675.1 410.4 L681.3 414.6 L687.3 419.5 L693.3 425.0 L699.1 431.2 L704.7 437.9 L710.2 445.2 L715.4 453.1 L720.4 461.4 L725.2 470.1 L729.6 479.3 L733.8 488.8 L737.6 498.7 L741.1 508.8 L744.3 519.2 L747.1 529.8 L749.4 540.6 L751.5 551.4 L753.1 562.3 L754.3 573.1 L755.0 584.0 L755.4 594.7 L755.4 605.3 L754.9 615.7 L754.0 625.8 L752.7 635.7 L751.0 645.3 L748.9 654.4 L746.5 663.2 L743.6 671.5 L740.4 679.3 L736.8 686.6 L732.9 693.4 L728.7 699.6 L724.1 705.1 L719.3 710.0 L714.3 714.3 L709.0 717.9 L703.5 720.7 L697.8 722.9 L691.9 724.4" fill="none" stroke="#141414" stroke-width="1.5"/>
<path d="M642.0 398.5 L648.0 397.8 L654.1 397.8 L660.2 398.5 L666.5 399.9 L672.7 402.1 L679.0 405.0 L685.2 408.5 L691.3 412.8 L697.4 417.7 L703.4 423.2 L709.2 429.4 L714.8 436.1 L720.3 443.4 L725.5 451.2 L730.5 459.5 L735.3 468.3 L739.7 477.4 L743.9 487.0 L747.7 496.8 L751.2 507.0 L754.4 517.4 L757.1 528.0 L759.5 538.7 L761.5 549.5 L763.2 560.4 L764.4 571.3 L765.1 582.1 L765.5 592.8 L765.5 603.4 L765.0 613.8 L764.1 624.0 L762.8 633.9 L761.1 643.4 L759.0 652.6 L756.5 661.3 L753.7 669.7 L750.4 677.5 L746.9 684.8 L742.9 691.5 L738.7 697.7 L734.2 703.3 L729.4 708.2 L724.3 712.4 L719.0 716.0 L713.5 718.9 L707.8 721.1 L702.0 722.5 L706.9 721.6 L712.7 720.2 L718.4 718.0 L724.0 715.1 L729.2 711.5 L734.3 707.3 L739.1 702.4 L743.7 696.8 L747.9 690.6 L751.8 683.9 L755.4 676.6 L758.6 668.8 L761.5 660.4 L764.0 651.7 L766.1 642.5 L767.8 632.9 L769.1 623.1 L769.9 612.9 L770.4 602.5 L770.5 591.9 L770.1 581.2 L769.3 570.4 L768.1 559.5 L766.5 548.6 L764.5 537.8 L762.1 527.1 L759.3 516.5 L756.2 506.1 L752.7 495.9 L748.8 486.1 L744.7 476.5 L740.2 467.4 L735.5 458.6 L730.5 450.3 L725.2 442.5 L719.8 435.2 L714.1 428.5 L708.3 422.3 L702.3 416.8 L696.3 411.9 L690.1 407.6 L683.9 404.1 L677.6 401.2 L671.4 399.0 L665.2 397.6 L659.0 396.9 L652.9 396.9 L646.9 397.6 Z" fill="url(#gp)" stroke="none"/>
<path d="M642.0 398.5 L648.0 397.8 L654.1 397.8 L660.2 398.5 L666.5 399.9 L672.7 402.1 L679.0 405.0 L685.2 408.5 L691.3 412.8 L697.4 417.7 L703.4 423.2 L709.2 429.4 L714.8 436.1 L720.3 443.4 L725.5 451.2 L730.5 459.5 L735.3 468.3 L739.7 477.4 L743.9 487.0 L747.7 496.8 L751.2 507.0 L754.4 517.4 L757.1 528.0 L759.5 538.7 L761.5 549.5 L763.2 560.4 L764.4 571.3 L765.1 582.1 L765.5 592.8 L765.5 603.4 L765.0 613.8 L764.1 624.0 L762.8 633.9 L761.1 643.4 L759.0 652.6 L756.5 661.3 L753.7 669.7 L750.4 677.5 L746.9 684.8 L742.9 691.5 L738.7 697.7 L734.2 703.3 L729.4 708.2 L724.3 712.4 L719.0 716.0 L713.5 718.9 L707.8 721.1 L702.0 722.5" fill="none" stroke="#141414" stroke-width="1.5"/>
<path d="M646.9 397.6 L652.9 396.9 L659.0 396.9 L665.2 397.6 L671.4 399.0 L677.6 401.2 L683.9 404.1 L690.1 407.6 L696.3 411.9 L702.3 416.8 L708.3 422.3 L714.1 428.5 L719.8 435.2 L725.2 442.5 L730.5 450.3 L735.5 458.6 L740.2 467.4 L744.7 476.5 L748.8 486.1 L752.7 495.9 L756.2 506.1 L759.3 516.5 L762.1 527.1 L764.5 537.8 L766.5 548.6 L768.1 559.5 L769.3 570.4 L770.1 581.2 L770.5 591.9 L770.4 602.5 L769.9 612.9 L769.1 623.1 L767.8 632.9 L766.1 642.5 L764.0 651.7 L761.5 660.4 L758.6 668.8 L755.4 676.6 L751.8 683.9 L747.9 690.6 L743.7 696.8 L739.1 702.4 L734.3 707.3 L729.2 711.5 L724.0 715.1 L718.4 718.0 L712.7 720.2 L706.9 721.6" fill="none" stroke="#141414" stroke-width="1.5"/>
<path d="M656.9 395.8 L662.9 395.0 L669.0 395.0 L675.2 395.8 L681.4 397.2 L687.7 399.4 L694.0 402.2 L700.2 405.8 L706.3 410.0 L712.4 414.9 L718.4 420.5 L724.2 426.6 L729.8 433.3 L735.3 440.6 L740.6 448.5 L745.6 456.8 L750.3 465.5 L754.8 474.7 L758.9 484.2 L762.8 494.1 L766.3 504.2 L769.4 514.6 L772.2 525.2 L774.6 535.9 L776.6 546.8 L778.2 557.6 L779.4 568.5 L780.2 579.3 L780.5 590.1 L780.5 600.7 L780.0 611.1 L779.1 621.2 L777.8 631.1 L776.1 640.6 L774.0 649.8 L771.6 658.6 L768.7 666.9 L765.4 674.7 L761.9 682.0 L757.9 688.8 L753.7 694.9 L749.2 700.5 L744.4 705.4 L739.3 709.7 L734.0 713.2 L728.5 716.1 L722.8 718.3 L716.9 719.8 L721.8 718.9 L727.7 717.4 L733.4 715.2 L738.9 712.3 L744.2 708.8 L749.3 704.5 L754.1 699.6 L758.6 694.0 L762.9 687.9 L766.8 681.1 L770.4 673.8 L773.6 666.0 L776.5 657.7 L779.0 648.9 L781.1 639.7 L782.8 630.2 L784.1 620.3 L785.0 610.2 L785.4 599.8 L785.5 589.2 L785.1 578.4 L784.3 567.6 L783.1 556.7 L781.5 545.9 L779.5 535.0 L777.1 524.3 L774.4 513.7 L771.2 503.3 L767.7 493.2 L763.9 483.3 L759.7 473.8 L755.3 464.6 L750.5 455.9 L745.5 447.6 L740.3 439.7 L734.8 432.4 L729.1 425.7 L723.3 419.6 L717.3 414.0 L711.3 409.1 L705.1 404.9 L698.9 401.3 L692.6 398.5 L686.4 396.3 L680.1 394.9 L674.0 394.1 L667.9 394.1 L661.9 394.9 Z" fill="url(#gp)" stroke="none"/>
<path d="M656.9 395.8 L662.9 395.0 L669.0 395.0 L675.2 395.8 L681.4 397.2 L687.7 399.4 L694.0 402.2 L700.2 405.8 L706.3 410.0 L712.4 414.9 L718.4 420.5 L724.2 426.6 L729.8 433.3 L735.3 440.6 L740.6 448.5 L745.6 456.8 L750.3 465.5 L754.8 474.7 L758.9 484.2 L762.8 494.1 L766.3 504.2 L769.4 514.6 L772.2 525.2 L774.6 535.9 L776.6 546.8 L778.2 557.6 L779.4 568.5 L780.2 579.3 L780.5 590.1 L780.5 600.7 L780.0 611.1 L779.1 621.2 L777.8 631.1 L776.1 640.6 L774.0 649.8 L771.6 658.6 L768.7 666.9 L765.4 674.7 L761.9 682.0 L757.9 688.8 L753.7 694.9 L749.2 700.5 L744.4 705.4 L739.3 709.7 L734.0 713.2 L728.5 716.1 L722.8 718.3 L716.9 719.8" fill="none" stroke="#141414" stroke-width="1.5"/>
<path d="M661.9 394.9 L667.9 394.1 L674.0 394.1 L680.1 394.9 L686.4 396.3 L692.6 398.5 L698.9 401.3 L705.1 404.9 L711.3 409.1 L717.3 414.0 L723.3 419.6 L729.1 425.7 L734.8 432.4 L740.3 439.7 L745.5 447.6 L750.5 455.9 L755.3 464.6 L759.7 473.8 L763.9 483.3 L767.7 493.2 L771.2 503.3 L774.4 513.7 L777.1 524.3 L779.5 535.0 L781.5 545.9 L783.1 556.7 L784.3 567.6 L785.1 578.4 L785.5 589.2 L785.4 599.8 L785.0 610.2 L784.1 620.3 L782.8 630.2 L781.1 639.7 L779.0 648.9 L776.5 657.7 L773.6 666.0 L770.4 673.8 L766.8 681.1 L762.9 687.9 L758.6 694.0 L754.1 699.6 L749.3 704.5 L744.2 708.8 L738.9 712.3 L733.4 715.2 L727.7 717.4 L721.8 718.9" fill="none" stroke="#141414" stroke-width="1.5"/>
<path d="M671.9 393.0 L677.9 392.3 L684.0 392.3 L690.2 393.0 L696.4 394.5 L702.7 396.6 L708.9 399.5 L715.2 403.0 L721.3 407.3 L727.4 412.2 L733.4 417.7 L739.2 423.9 L744.9 430.6 L750.3 437.9 L755.6 445.7 L760.6 454.0 L765.3 462.8 L769.8 471.9 L774.0 481.5 L777.8 491.3 L781.3 501.5 L784.5 511.9 L787.2 522.5 L789.6 533.2 L791.6 544.0 L793.2 554.9 L794.4 565.8 L795.2 576.6 L795.6 587.3 L795.5 597.9 L795.1 608.3 L794.2 618.5 L792.9 628.3 L791.2 637.9 L789.1 647.1 L786.6 655.8 L783.7 664.1 L780.5 672.0 L776.9 679.3 L772.9 686.0 L768.7 692.2 L764.2 697.7 L759.3 702.7 L754.3 706.9 L749.0 710.5 L743.4 713.4 L737.7 715.6 L731.9 717.0 L736.8 716.1 L742.7 714.6 L748.4 712.5 L753.9 709.6 L759.2 706.0 L764.3 701.7 L769.1 696.8 L773.6 691.3 L777.9 685.1 L781.8 678.4 L785.4 671.1 L788.6 663.2 L791.5 654.9 L794.0 646.1 L796.1 637.0 L797.8 627.4 L799.1 617.5 L800.0 607.4 L800.5 597.0 L800.5 586.4 L800.2 575.7 L799.4 564.8 L798.2 554.0 L796.6 543.1 L794.6 532.3 L792.2 521.5 L789.4 511.0 L786.3 500.6 L782.8 490.4 L778.9 480.6 L774.8 471.0 L770.3 461.9 L765.5 453.1 L760.5 444.8 L755.3 437.0 L749.8 429.7 L744.1 423.0 L738.3 416.8 L732.4 411.3 L726.3 406.4 L720.1 402.1 L713.9 398.6 L707.6 395.7 L701.3 393.6 L695.1 392.1 L688.9 391.4 L682.8 391.4 L676.8 392.1 Z" fill="url(#gp)" stroke="none"/>
<path d="M671.9 393.0 L677.9 392.3 L684.0 392.3 L690.2 393.0 L696.4 394.5 L702.7 396.6 L708.9 399.5 L715.2 403.0 L721.3 407.3 L727.4 412.2 L733.4 417.7 L739.2 423.9 L744.9 430.6 L750.3 437.9 L755.6 445.7 L760.6 454.0 L765.3 462.8 L769.8 471.9 L774.0 481.5 L777.8 491.3 L781.3 501.5 L784.5 511.9 L787.2 522.5 L789.6 533.2 L791.6 544.0 L793.2 554.9 L794.4 565.8 L795.2 576.6 L795.6 587.3 L795.5 597.9 L795.1 608.3 L794.2 618.5 L792.9 628.3 L791.2 637.9 L789.1 647.1 L786.6 655.8 L783.7 664.1 L780.5 672.0 L776.9 679.3 L772.9 686.0 L768.7 692.2 L764.2 697.7 L759.3 702.7 L754.3 706.9 L749.0 710.5 L743.4 713.4 L737.7 715.6 L731.9 717.0" fill="none" stroke="#141414" stroke-width="1.5"/>
<path d="M676.8 392.1 L682.8 391.4 L688.9 391.4 L695.1 392.1 L701.3 393.6 L707.6 395.7 L713.9 398.6 L720.1 402.1 L726.3 406.4 L732.4 411.3 L738.3 416.8 L744.1 423.0 L749.8 429.7 L755.3 437.0 L760.5 444.8 L765.5 453.1 L770.3 461.9 L774.8 471.0 L778.9 480.6 L782.8 490.4 L786.3 500.6 L789.4 511.0 L792.2 521.5 L794.6 532.3 L796.6 543.1 L798.2 554.0 L799.4 564.8 L800.2 575.7 L800.5 586.4 L800.5 597.0 L800.0 607.4 L799.1 617.5 L797.8 627.4 L796.1 637.0 L794.0 646.1 L791.5 654.9 L788.6 663.2 L785.4 671.1 L781.8 678.4 L777.9 685.1 L773.6 691.3 L769.1 696.8 L764.3 701.7 L759.2 706.0 L753.9 709.6 L748.4 712.5 L742.7 714.6 L736.8 716.1" fill="none" stroke="#141414" stroke-width="1.5"/>
<path d="M686.8 390.3 L692.9 389.6 L699.0 389.6 L705.2 390.3 L711.4 391.7 L717.7 393.9 L723.9 396.7 L730.2 400.3 L736.3 404.5 L742.4 409.4 L748.4 415.0 L754.2 421.1 L759.9 427.9 L765.4 435.1 L770.6 443.0 L775.6 451.3 L780.4 460.0 L784.9 469.2 L789.0 478.7 L792.9 488.6 L796.4 498.7 L799.5 509.1 L802.3 519.7 L804.7 530.4 L806.7 541.2 L808.3 552.1 L809.5 563.0 L810.3 573.8 L810.6 584.6 L810.6 595.1 L810.1 605.5 L809.2 615.7 L807.9 625.6 L806.2 635.1 L804.1 644.3 L801.6 653.1 L798.7 661.4 L795.5 669.2 L791.9 676.5 L787.9 683.3 L783.7 689.4 L779.1 695.0 L774.3 699.9 L769.2 704.2 L763.9 707.7 L758.4 710.6 L752.7 712.8 L746.8 714.3 L751.7 713.4 L757.6 711.9 L763.3 709.7 L768.9 706.8 L774.2 703.2 L779.3 699.0 L784.1 694.1 L788.6 688.5 L792.9 682.3 L796.8 675.6 L800.4 668.3 L803.6 660.5 L806.5 652.1 L809.0 643.4 L811.1 634.2 L812.8 624.7 L814.2 614.8 L815.0 604.6 L815.5 594.2 L815.6 583.6 L815.2 572.9 L814.4 562.1 L813.2 551.2 L811.6 540.3 L809.6 529.5 L807.2 518.8 L804.5 508.2 L801.3 497.8 L797.8 487.7 L794.0 477.8 L789.8 468.3 L785.3 459.1 L780.6 450.4 L775.6 442.1 L770.3 434.2 L764.8 427.0 L759.2 420.2 L753.3 414.1 L747.4 408.5 L741.3 403.6 L735.1 399.4 L728.9 395.8 L722.6 393.0 L716.3 390.8 L710.1 389.4 L703.9 388.7 L697.8 388.7 L691.8 389.4 Z" fill="url(#gp)" stroke="none"/>
<path d="M686.8 390.3 L692.9 389.6 L699.0 389.6 L705.2 390.3 L711.4 391.7 L717.7 393.9 L723.9 396.7 L730.2 400.3 L736.3 404.5 L742.4 409.4 L748.4 415.0 L754.2 421.1 L759.9 427.9 L765.4 435.1 L770.6 443.0 L775.6 451.3 L780.4 460.0 L784.9 469.2 L789.0 478.7 L792.9 488.6 L796.4 498.7 L799.5 509.1 L802.3 519.7 L804.7 530.4 L806.7 541.2 L808.3 552.1 L809.5 563.0 L810.3 573.8 L810.6 584.6 L810.6 595.1 L810.1 605.5 L809.2 615.7 L807.9 625.6 L806.2 635.1 L804.1 644.3 L801.6 653.1 L798.7 661.4 L795.5 669.2 L791.9 676.5 L787.9 683.3 L783.7 689.4 L779.1 695.0 L774.3 699.9 L769.2 704.2 L763.9 707.7 L758.4 710.6 L752.7 712.8 L746.8 714.3" fill="none" stroke="#141414" stroke-width="1.5"/>
<path d="M691.8 389.4 L697.8 388.7 L703.9 388.7 L710.1 389.4 L716.3 390.8 L722.6 393.0 L728.9 395.8 L735.1 399.4 L741.3 403.6 L747.4 408.5 L753.3 414.1 L759.2 420.2 L764.8 427.0 L770.3 434.2 L775.6 442.1 L780.6 450.4 L785.3 459.1 L789.8 468.3 L794.0 477.8 L797.8 487.7 L801.3 497.8 L804.5 508.2 L807.2 518.8 L809.6 529.5 L811.6 540.3 L813.2 551.2 L814.4 562.1 L815.2 572.9 L815.6 583.6 L815.5 594.2 L815.0 604.6 L814.2 614.8 L812.8 624.7 L811.1 634.2 L809.0 643.4 L806.5 652.1 L803.6 660.5 L800.4 668.3 L796.8 675.6 L792.9 682.3 L788.6 688.5 L784.1 694.1 L779.3 699.0 L774.2 703.2 L768.9 706.8 L763.3 709.7 L757.6 711.9 L751.7 713.4" fill="none" stroke="#141414" stroke-width="1.5"/>
<path d="M701.8 387.6 L707.8 386.8 L713.9 386.8 L720.1 387.5 L726.4 389.0 L732.7 391.1 L738.9 394.0 L745.2 397.6 L751.3 401.8 L757.4 406.7 L763.4 412.2 L769.2 418.4 L774.9 425.1 L780.4 432.4 L785.6 440.2 L790.7 448.5 L795.4 457.3 L799.9 466.4 L804.1 476.0 L807.9 485.8 L811.4 496.0 L814.6 506.4 L817.3 516.9 L819.7 527.7 L821.7 538.5 L823.3 549.4 L824.5 560.2 L825.3 571.1 L825.7 581.8 L825.6 592.4 L825.1 602.8 L824.2 612.9 L822.9 622.8 L821.2 632.3 L819.1 641.5 L816.6 650.3 L813.7 658.6 L810.5 666.4 L806.9 673.7 L802.9 680.5 L798.7 686.7 L794.1 692.2 L789.3 697.1 L784.2 701.4 L778.9 705.0 L773.4 707.9 L767.6 710.0 L761.8 711.5 L766.7 710.6 L772.6 709.1 L778.3 707.0 L783.8 704.1 L789.1 700.5 L794.2 696.2 L799.1 691.3 L803.6 685.8 L807.9 679.6 L811.8 672.8 L815.4 665.5 L818.7 657.7 L821.5 649.4 L824.0 640.6 L826.2 631.4 L827.9 621.9 L829.2 612.0 L830.1 601.9 L830.6 591.5 L830.6 580.9 L830.3 570.2 L829.5 559.3 L828.3 548.5 L826.7 537.6 L824.7 526.8 L822.3 516.0 L819.5 505.4 L816.4 495.1 L812.9 484.9 L809.0 475.1 L804.8 465.5 L800.4 456.4 L795.6 447.6 L790.6 439.3 L785.3 431.5 L779.9 424.2 L774.2 417.5 L768.3 411.3 L762.4 405.8 L756.3 400.9 L750.1 396.7 L743.9 393.1 L737.6 390.2 L731.3 388.1 L725.1 386.6 L718.9 385.9 L712.7 385.9 L706.7 386.7 Z" fill="url(#gp)" stroke="none"/>
<path d="M701.8 387.6 L707.8 386.8 L713.9 386.8 L720.1 387.5 L726.4 389.0 L732.7 391.1 L738.9 394.0 L745.2 397.6 L751.3 401.8 L757.4 406.7 L763.4 412.2 L769.2 418.4 L774.9 425.1 L780.4 432.4 L785.6 440.2 L790.7 448.5 L795.4 457.3 L799.9 466.4 L804.1 476.0 L807.9 485.8 L811.4 496.0 L814.6 506.4 L817.3 516.9 L819.7 527.7 L821.7 538.5 L823.3 549.4 L824.5 560.2 L825.3 571.1 L825.7 581.8 L825.6 592.4 L825.1 602.8 L824.2 612.9 L822.9 622.8 L821.2 632.3 L819.1 641.5 L816.6 650.3 L813.7 658.6 L810.5 666.4 L806.9 673.7 L802.9 680.5 L798.7 686.7 L794.1 692.2 L789.3 697.1 L784.2 701.4 L778.9 705.0 L773.4 707.9 L767.6 710.0 L761.8 711.5" fill="none" stroke="#141414" stroke-width="1.5"/>
<path d="M706.7 386.7 L712.7 385.9 L718.9 385.9 L725.1 386.6 L731.3 388.1 L737.6 390.2 L743.9 393.1 L750.1 396.7 L756.3 400.9 L762.4 405.8 L768.3 411.3 L774.2 417.5 L779.9 424.2 L785.3 431.5 L790.6 439.3 L795.6 447.6 L800.4 456.4 L804.8 465.5 L809.0 475.1 L812.9 484.9 L816.4 495.1 L819.5 505.4 L822.3 516.0 L824.7 526.8 L826.7 537.6 L828.3 548.5 L829.5 559.3 L830.3 570.2 L830.6 580.9 L830.6 591.5 L830.1 601.9 L829.2 612.0 L827.9 621.9 L826.2 631.4 L824.0 640.6 L821.5 649.4 L818.7 657.7 L815.4 665.5 L811.8 672.8 L807.9 679.6 L803.6 685.8 L799.1 691.3 L794.2 696.2 L789.1 700.5 L783.8 704.1 L778.3 707.0 L772.6 709.1 L766.7 710.6" fill="none" stroke="#141414" stroke-width="1.5"/>
<path d="M716.8 384.9 L722.8 384.1 L728.9 384.1 L735.1 384.8 L741.4 386.3 L747.6 388.4 L753.9 391.3 L760.2 394.8 L766.3 399.1 L772.4 403.9 L778.4 409.5 L784.3 415.6 L789.9 422.4 L795.4 429.6 L800.7 437.5 L805.7 445.8 L810.5 454.5 L814.9 463.7 L819.1 473.2 L822.9 483.1 L826.5 493.2 L829.6 503.6 L832.4 514.2 L834.8 524.9 L836.8 535.7 L838.4 546.6 L839.6 557.5 L840.4 568.3 L840.7 579.0 L840.7 589.6 L840.2 600.0 L839.3 610.2 L838.0 620.0 L836.2 629.6 L834.1 638.8 L831.6 647.5 L828.7 655.8 L825.5 663.7 L821.9 671.0 L817.9 677.7 L813.7 683.9 L809.1 689.5 L804.3 694.4 L799.2 698.6 L793.9 702.2 L788.3 705.1 L782.6 707.3 L776.7 708.7 L781.6 707.8 L787.5 706.4 L793.2 704.2 L798.8 701.3 L804.1 697.7 L809.2 693.5 L814.1 688.5 L818.6 683.0 L822.9 676.8 L826.8 670.1 L830.4 662.8 L833.7 654.9 L836.6 646.6 L839.1 637.9 L841.2 628.7 L842.9 619.1 L844.2 609.3 L845.1 599.1 L845.6 588.7 L845.7 578.1 L845.3 567.4 L844.5 556.6 L843.3 545.7 L841.7 534.8 L839.7 524.0 L837.3 513.3 L834.5 502.7 L831.4 492.3 L827.9 482.2 L824.0 472.3 L819.9 462.8 L815.4 453.6 L810.6 444.9 L805.6 436.6 L800.4 428.7 L794.9 421.5 L789.2 414.7 L783.4 408.6 L777.4 403.0 L771.3 398.2 L765.1 393.9 L758.8 390.4 L752.6 387.5 L746.3 385.4 L740.0 383.9 L733.8 383.2 L727.7 383.2 L721.7 384.0 Z" fill="url(#gp)" stroke="none"/>
<path d="M716.8 384.9 L722.8 384.1 L728.9 384.1 L735.1 384.8 L741.4 386.3 L747.6 388.4 L753.9 391.3 L760.2 394.8 L766.3 399.1 L772.4 403.9 L778.4 409.5 L784.3 415.6 L789.9 422.4 L795.4 429.6 L800.7 437.5 L805.7 445.8 L810.5 454.5 L814.9 463.7 L819.1 473.2 L822.9 483.1 L826.5 493.2 L829.6 503.6 L832.4 514.2 L834.8 524.9 L836.8 535.7 L838.4 546.6 L839.6 557.5 L840.4 568.3 L840.7 579.0 L840.7 589.6 L840.2 600.0 L839.3 610.2 L838.0 620.0 L836.2 629.6 L834.1 638.8 L831.6 647.5 L828.7 655.8 L825.5 663.7 L821.9 671.0 L817.9 677.7 L813.7 683.9 L809.1 689.5 L804.3 694.4 L799.2 698.6 L793.9 702.2 L788.3 705.1 L782.6 707.3 L776.7 708.7" fill="none" stroke="#141414" stroke-width="1.5"/>
<path d="M721.7 384.0 L727.7 383.2 L733.8 383.2 L740.0 383.9 L746.3 385.4 L752.6 387.5 L758.8 390.4 L765.1 393.9 L771.3 398.2 L777.4 403.0 L783.4 408.6 L789.2 414.7 L794.9 421.5 L800.4 428.7 L805.6 436.6 L810.6 444.9 L815.4 453.6 L819.9 462.8 L824.0 472.3 L827.9 482.2 L831.4 492.3 L834.5 502.7 L837.3 513.3 L839.7 524.0 L841.7 534.8 L843.3 545.7 L844.5 556.6 L845.3 567.4 L845.7 578.1 L845.6 588.7 L845.1 599.1 L844.2 609.3 L842.9 619.1 L841.2 628.7 L839.1 637.9 L836.6 646.6 L833.7 654.9 L830.4 662.8 L826.8 670.1 L822.9 676.8 L818.6 683.0 L814.1 688.5 L809.2 693.5 L804.1 697.7 L798.8 701.3 L793.2 704.2 L787.5 706.4 L781.6 707.8" fill="none" stroke="#141414" stroke-width="1.5"/>
<path d="M731.7 382.1 L737.7 381.4 L743.9 381.4 L750.1 382.1 L756.3 383.5 L762.6 385.7 L768.9 388.5 L775.2 392.1 L781.3 396.3 L787.4 401.2 L793.4 406.7 L799.3 412.9 L805.0 419.6 L810.4 426.9 L815.7 434.7 L820.7 443.0 L825.5 451.8 L830.0 460.9 L834.1 470.4 L838.0 480.3 L841.5 490.5 L844.6 500.8 L847.4 511.4 L849.8 522.1 L851.8 533.0 L853.4 543.8 L854.6 554.7 L855.4 565.5 L855.8 576.3 L855.7 586.8 L855.2 597.2 L854.3 607.4 L853.0 617.3 L851.3 626.8 L849.2 636.0 L846.6 644.8 L843.7 653.1 L840.5 660.9 L836.9 668.2 L832.9 675.0 L828.7 681.1 L824.1 686.7 L819.3 691.6 L814.2 695.9 L808.8 699.5 L803.3 702.3 L797.6 704.5 L791.7 706.0 L796.6 705.1 L802.5 703.6 L808.2 701.4 L813.8 698.6 L819.1 695.0 L824.2 690.7 L829.0 685.8 L833.6 680.2 L837.9 674.1 L841.8 667.3 L845.4 660.0 L848.7 652.2 L851.6 643.9 L854.1 635.1 L856.2 625.9 L857.9 616.4 L859.3 606.5 L860.2 596.3 L860.6 585.9 L860.7 575.4 L860.3 564.6 L859.6 553.8 L858.4 542.9 L856.8 532.1 L854.8 521.2 L852.4 510.5 L849.6 499.9 L846.4 489.5 L842.9 479.4 L839.1 469.5 L834.9 460.0 L830.4 450.8 L825.7 442.1 L820.6 433.8 L815.4 426.0 L809.9 418.7 L804.2 412.0 L798.4 405.8 L792.4 400.3 L786.3 395.4 L780.1 391.2 L773.8 387.6 L767.5 384.8 L761.3 382.6 L755.0 381.2 L748.8 380.5 L742.6 380.5 L736.6 381.2 Z" fill="url(#gp)" stroke="none"/>
<path d="M731.7 382.1 L737.7 381.4 L743.9 381.4 L750.1 382.1 L756.3 383.5 L762.6 385.7 L768.9 388.5 L775.2 392.1 L781.3 396.3 L787.4 401.2 L793.4 406.7 L799.3 412.9 L805.0 419.6 L810.4 426.9 L815.7 434.7 L820.7 443.0 L825.5 451.8 L830.0 460.9 L834.1 470.4 L838.0 480.3 L841.5 490.5 L844.6 500.8 L847.4 511.4 L849.8 522.1 L851.8 533.0 L853.4 543.8 L854.6 554.7 L855.4 565.5 L855.8 576.3 L855.7 586.8 L855.2 597.2 L854.3 607.4 L853.0 617.3 L851.3 626.8 L849.2 636.0 L846.6 644.8 L843.7 653.1 L840.5 660.9 L836.9 668.2 L832.9 675.0 L828.7 681.1 L824.1 686.7 L819.3 691.6 L814.2 695.9 L808.8 699.5 L803.3 702.3 L797.6 704.5 L791.7 706.0" fill="none" stroke="#141414" stroke-width="1.5"/>
<path d="M736.6 381.2 L742.6 380.5 L748.8 380.5 L755.0 381.2 L761.3 382.6 L767.5 384.8 L773.8 387.6 L780.1 391.2 L786.3 395.4 L792.4 400.3 L798.4 405.8 L804.2 412.0 L809.9 418.7 L815.4 426.0 L820.6 433.8 L825.7 442.1 L830.4 450.8 L834.9 460.0 L839.1 469.5 L842.9 479.4 L846.4 489.5 L849.6 499.9 L852.4 510.5 L854.8 521.2 L856.8 532.1 L858.4 542.9 L859.6 553.8 L860.3 564.6 L860.7 575.4 L860.6 585.9 L860.2 596.3 L859.3 606.5 L857.9 616.4 L856.2 625.9 L854.1 635.1 L851.6 643.9 L848.7 652.2 L845.4 660.0 L841.8 667.3 L837.9 674.1 L833.6 680.2 L829.0 685.8 L824.2 690.7 L819.1 695.0 L813.8 698.6 L808.2 701.4 L802.5 703.6 L796.6 705.1" fill="none" stroke="#141414" stroke-width="1.5"/>
<path d="M746.7 379.4 L752.7 378.7 L758.8 378.6 L765.0 379.3 L771.3 380.8 L777.6 382.9 L783.9 385.8 L790.1 389.3 L796.3 393.6 L802.5 398.5 L808.4 404.0 L814.3 410.1 L820.0 416.9 L825.5 424.1 L830.7 432.0 L835.8 440.3 L840.5 449.0 L845.0 458.2 L849.2 467.7 L853.0 477.6 L856.5 487.7 L859.7 498.1 L862.5 508.7 L864.9 519.4 L866.9 530.2 L868.5 541.1 L869.7 551.9 L870.4 562.8 L870.8 573.5 L870.7 584.1 L870.2 594.5 L869.3 604.6 L868.0 614.5 L866.3 624.1 L864.2 633.2 L861.7 642.0 L858.8 650.3 L855.5 658.1 L851.9 665.5 L847.9 672.2 L843.7 678.4 L839.1 683.9 L834.2 688.9 L829.1 693.1 L823.8 696.7 L818.2 699.6 L812.5 701.8 L806.6 703.2 L811.5 702.3 L817.4 700.9 L823.2 698.7 L828.7 695.8 L834.1 692.2 L839.2 687.9 L844.0 683.0 L848.6 677.5 L852.9 671.3 L856.8 664.5 L860.4 657.2 L863.7 649.4 L866.6 641.1 L869.1 632.3 L871.2 623.1 L873.0 613.6 L874.3 603.7 L875.2 593.6 L875.7 583.2 L875.7 572.6 L875.4 561.9 L874.6 551.0 L873.4 540.2 L871.8 529.3 L869.8 518.5 L867.4 507.8 L864.6 497.2 L861.5 486.8 L858.0 476.6 L854.1 466.8 L850.0 457.3 L845.5 448.1 L840.7 439.3 L835.7 431.1 L830.4 423.2 L824.9 416.0 L819.2 409.2 L813.4 403.1 L807.4 397.6 L801.3 392.7 L795.1 388.4 L788.8 384.9 L782.5 382.0 L776.2 379.9 L770.0 378.4 L763.7 377.7 L757.6 377.8 L751.6 378.5 Z" fill="url(#gp)" stroke="none"/>
<path d="M746.7 379.4 L752.7 378.7 L758.8 378.6 L765.0 379.3 L771.3 380.8 L777.6 382.9 L783.9 385.8 L790.1 389.3 L796.3 393.6 L802.5 398.5 L808.4 404.0 L814.3 410.1 L820.0 416.9 L825.5 424.1 L830.7 432.0 L835.8 440.3 L840.5 449.0 L845.0 458.2 L849.2 467.7 L853.0 477.6 L856.5 487.7 L859.7 498.1 L862.5 508.7 L864.9 519.4 L866.9 530.2 L868.5 541.1 L869.7 551.9 L870.4 562.8 L870.8 573.5 L870.7 584.1 L870.2 594.5 L869.3 604.6 L868.0 614.5 L866.3 624.1 L864.2 633.2 L861.7 642.0 L858.8 650.3 L855.5 658.1 L851.9 665.5 L847.9 672.2 L843.7 678.4 L839.1 683.9 L834.2 688.9 L829.1 693.1 L823.8 696.7 L818.2 699.6 L812.5 701.8 L806.6 703.2" fill="none" stroke="#141414" stroke-width="1.5"/>
<path d="M751.6 378.5 L757.6 377.8 L763.7 377.7 L770.0 378.4 L776.2 379.9 L782.5 382.0 L788.8 384.9 L795.1 388.4 L801.3 392.7 L807.4 397.6 L813.4 403.1 L819.2 409.2 L824.9 416.0 L830.4 423.2 L835.7 431.1 L840.7 439.3 L845.5 448.1 L850.0 457.3 L854.1 466.8 L858.0 476.6 L861.5 486.8 L864.6 497.2 L867.4 507.8 L869.8 518.5 L871.8 529.3 L873.4 540.2 L874.6 551.0 L875.4 561.9 L875.7 572.6 L875.7 583.2 L875.2 593.6 L874.3 603.7 L873.0 613.6 L871.2 623.1 L869.1 632.3 L866.6 641.1 L863.7 649.4 L860.4 657.2 L856.8 664.5 L852.9 671.3 L848.6 677.5 L844.0 683.0 L839.2 687.9 L834.1 692.2 L828.7 695.8 L823.2 698.7 L817.4 700.9 L811.5 702.3" fill="none" stroke="#141414" stroke-width="1.5"/>
<path d="M761.6 376.7 L767.6 375.9 L773.8 375.9 L780.0 376.6 L786.3 378.0 L792.6 380.2 L798.9 383.0 L805.1 386.6 L811.3 390.8 L817.5 395.7 L823.5 401.2 L829.3 407.4 L835.0 414.1 L840.5 421.4 L845.8 429.2 L850.8 437.5 L855.6 446.2 L860.0 455.4 L864.2 464.9 L868.1 474.8 L871.6 484.9 L874.7 495.3 L877.5 505.9 L879.9 516.6 L881.9 527.4 L883.5 538.3 L884.7 549.2 L885.5 560.0 L885.8 570.7 L885.8 581.3 L885.3 591.7 L884.4 601.9 L883.1 611.7 L881.3 621.3 L879.2 630.5 L876.7 639.2 L873.8 647.6 L870.5 655.4 L866.9 662.7 L862.9 669.4 L858.7 675.6 L854.1 681.2 L849.2 686.1 L844.1 690.4 L838.8 693.9 L833.2 696.8 L827.5 699.0 L821.6 700.5 L826.5 699.6 L832.4 698.1 L838.1 695.9 L843.7 693.0 L849.0 689.5 L854.2 685.2 L859.0 680.3 L863.6 674.7 L867.9 668.5 L871.8 661.8 L875.4 654.5 L878.7 646.6 L881.6 638.3 L884.1 629.6 L886.3 620.4 L888.0 610.8 L889.3 601.0 L890.2 590.8 L890.7 580.4 L890.8 569.8 L890.4 559.1 L889.7 548.3 L888.5 537.4 L886.9 526.5 L884.9 515.7 L882.5 505.0 L879.7 494.4 L876.5 484.0 L873.0 473.9 L869.2 464.0 L865.0 454.5 L860.5 445.3 L855.7 436.6 L850.7 428.3 L845.4 420.5 L839.9 413.2 L834.2 406.5 L828.4 400.3 L822.4 394.8 L816.3 389.9 L810.1 385.7 L803.8 382.1 L797.5 379.3 L791.2 377.1 L784.9 375.7 L778.7 375.0 L772.6 375.0 L766.5 375.8 Z" fill="url(#gp)" stroke="none"/>
<path d="M761.6 376.7 L767.6 375.9 L773.8 375.9 L780.0 376.6 L786.3 378.0 L792.6 380.2 L798.9 383.0 L805.1 386.6 L811.3 390.8 L817.5 395.7 L823.5 401.2 L829.3 407.4 L835.0 414.1 L840.5 421.4 L845.8 429.2 L850.8 437.5 L855.6 446.2 L860.0 455.4 L864.2 464.9 L868.1 474.8 L871.6 484.9 L874.7 495.3 L877.5 505.9 L879.9 516.6 L881.9 527.4 L883.5 538.3 L884.7 549.2 L885.5 560.0 L885.8 570.7 L885.8 581.3 L885.3 591.7 L884.4 601.9 L883.1 611.7 L881.3 621.3 L879.2 630.5 L876.7 639.2 L873.8 647.6 L870.5 655.4 L866.9 662.7 L862.9 669.4 L858.7 675.6 L854.1 681.2 L849.2 686.1 L844.1 690.4 L838.8 693.9 L833.2 696.8 L827.5 699.0 L821.6 700.5" fill="none" stroke="#141414" stroke-width="1.5"/>
<path d="M766.5 375.8 L772.6 375.0 L778.7 375.0 L784.9 375.7 L791.2 377.1 L797.5 379.3 L803.8 382.1 L810.1 385.7 L816.3 389.9 L822.4 394.8 L828.4 400.3 L834.2 406.5 L839.9 413.2 L845.4 420.5 L850.7 428.3 L855.7 436.6 L860.5 445.3 L865.0 454.5 L869.2 464.0 L873.0 473.9 L876.5 484.0 L879.7 494.4 L882.5 505.0 L884.9 515.7 L886.9 526.5 L888.5 537.4 L889.7 548.3 L890.4 559.1 L890.8 569.8 L890.7 580.4 L890.2 590.8 L889.3 601.0 L888.0 610.8 L886.3 620.4 L884.1 629.6 L881.6 638.3 L878.7 646.6 L875.4 654.5 L871.8 661.8 L867.9 668.5 L863.6 674.7 L859.0 680.3 L854.2 685.2 L849.0 689.5 L843.7 693.0 L838.1 695.9 L832.4 698.1 L826.5 699.6" fill="none" stroke="#141414" stroke-width="1.5"/>
<path d="M776.6 373.9 L782.6 373.2 L788.8 373.2 L795.0 373.9 L801.3 375.3 L807.6 377.5 L813.9 380.3 L820.1 383.9 L826.3 388.1 L832.5 393.0 L838.5 398.5 L844.3 404.6 L850.0 411.4 L855.5 418.7 L860.8 426.5 L865.8 434.8 L870.6 443.5 L875.1 452.7 L879.3 462.2 L883.1 472.0 L886.6 482.2 L889.8 492.6 L892.6 503.1 L895.0 513.9 L897.0 524.7 L898.6 535.6 L899.8 546.4 L900.5 557.2 L900.9 568.0 L900.8 578.6 L900.3 589.0 L899.4 599.1 L898.1 609.0 L896.4 618.5 L894.2 627.7 L891.7 636.5 L888.8 644.8 L885.5 652.6 L881.9 659.9 L877.9 666.7 L873.6 672.9 L869.1 678.4 L864.2 683.3 L859.1 687.6 L853.7 691.2 L848.2 694.1 L842.4 696.3 L836.5 697.7 L841.4 696.8 L847.3 695.4 L853.1 693.2 L858.7 690.3 L864.0 686.7 L869.1 682.4 L874.0 677.5 L878.6 671.9 L882.9 665.8 L886.8 659.0 L890.5 651.7 L893.7 643.9 L896.6 635.6 L899.2 626.8 L901.3 617.6 L903.0 608.1 L904.4 598.2 L905.3 588.0 L905.8 577.6 L905.8 567.1 L905.5 556.3 L904.7 545.5 L903.5 534.6 L901.9 523.8 L899.9 513.0 L897.5 502.2 L894.7 491.7 L891.6 481.3 L888.1 471.1 L884.2 461.3 L880.0 451.7 L875.5 442.6 L870.8 433.8 L865.7 425.6 L860.5 417.7 L855.0 410.5 L849.3 403.7 L843.4 397.6 L837.4 392.1 L831.3 387.2 L825.1 383.0 L818.8 379.4 L812.5 376.6 L806.2 374.4 L799.9 373.0 L793.7 372.3 L787.5 372.3 L781.5 373.0 Z" fill="url(#gp)" stroke="none"/>
<path d="M776.6 373.9 L782.6 373.2 L788.8 373.2 L795.0 373.9 L801.3 375.3 L807.6 377.5 L813.9 380.3 L820.1 383.9 L826.3 388.1 L832.5 393.0 L838.5 398.5 L844.3 404.6 L850.0 411.4 L855.5 418.7 L860.8 426.5 L865.8 434.8 L870.6 443.5 L875.1 452.7 L879.3 462.2 L883.1 472.0 L886.6 482.2 L889.8 492.6 L892.6 503.1 L895.0 513.9 L897.0 524.7 L898.6 535.6 L899.8 546.4 L900.5 557.2 L900.9 568.0 L900.8 578.6 L900.3 589.0 L899.4 599.1 L898.1 609.0 L896.4 618.5 L894.2 627.7 L891.7 636.5 L888.8 644.8 L885.5 652.6 L881.9 659.9 L877.9 666.7 L873.6 672.9 L869.1 678.4 L864.2 683.3 L859.1 687.6 L853.7 691.2 L848.2 694.1 L842.4 696.3 L836.5 697.7" fill="none" stroke="#141414" stroke-width="1.5"/>
<path d="M781.5 373.0 L787.5 372.3 L793.7 372.3 L799.9 373.0 L806.2 374.4 L812.5 376.6 L818.8 379.4 L825.1 383.0 L831.3 387.2 L837.4 392.1 L843.4 397.6 L849.3 403.7 L855.0 410.5 L860.5 417.7 L865.7 425.6 L870.8 433.8 L875.5 442.6 L880.0 451.7 L884.2 461.3 L888.1 471.1 L891.6 481.3 L894.7 491.7 L897.5 502.2 L899.9 513.0 L901.9 523.8 L903.5 534.6 L904.7 545.5 L905.5 556.3 L905.8 567.1 L905.8 577.6 L905.3 588.0 L904.4 598.2 L903.0 608.1 L901.3 617.6 L899.2 626.8 L896.6 635.6 L893.7 643.9 L890.5 651.7 L886.8 659.0 L882.9 665.8 L878.6 671.9 L874.0 677.5 L869.1 682.4 L864.0 686.7 L858.7 690.3 L853.1 693.2 L847.3 695.4 L841.4 696.8" fill="none" stroke="#141414" stroke-width="1.5"/>
<path d="M791.5 371.2 L797.6 370.5 L803.7 370.4 L810.0 371.1 L816.2 372.6 L822.6 374.7 L828.9 377.6 L835.1 381.1 L841.3 385.3 L847.5 390.2 L853.5 395.8 L859.3 401.9 L865.0 408.6 L870.5 415.9 L875.8 423.7 L880.9 432.0 L885.6 440.7 L890.1 449.9 L894.3 459.4 L898.2 469.3 L901.7 479.4 L904.8 489.8 L907.6 500.4 L910.0 511.1 L912.0 521.9 L913.6 532.8 L914.8 543.7 L915.6 554.5 L915.9 565.2 L915.8 575.8 L915.4 586.2 L914.4 596.3 L913.1 606.2 L911.4 615.8 L909.2 624.9 L906.7 633.7 L903.8 642.0 L900.5 649.9 L896.9 657.2 L892.9 663.9 L888.6 670.1 L884.1 675.7 L879.2 680.6 L874.1 684.8 L868.7 688.4 L863.1 691.3 L857.4 693.5 L851.5 695.0 L856.4 694.1 L862.3 692.6 L868.1 690.4 L873.6 687.5 L879.0 683.9 L884.1 679.7 L889.0 674.7 L893.6 669.2 L897.9 663.0 L901.8 656.3 L905.5 648.9 L908.7 641.1 L911.7 632.8 L914.2 624.0 L916.3 614.9 L918.1 605.3 L919.4 595.4 L920.3 585.3 L920.8 574.9 L920.9 564.3 L920.5 553.6 L919.7 542.8 L918.6 531.9 L917.0 521.0 L915.0 510.2 L912.6 499.5 L909.8 488.9 L906.6 478.5 L903.1 468.4 L899.3 458.5 L895.1 449.0 L890.6 439.8 L885.8 431.1 L880.8 422.8 L875.5 415.0 L870.0 407.7 L864.3 401.0 L858.4 394.9 L852.4 389.3 L846.3 384.4 L840.1 380.2 L833.8 376.7 L827.5 373.8 L821.2 371.7 L814.9 370.2 L808.6 369.5 L802.5 369.6 L796.4 370.3 Z" fill="url(#gp)" stroke="none"/>
<path d="M791.5 371.2 L797.6 370.5 L803.7 370.4 L810.0 371.1 L816.2 372.6 L822.6 374.7 L828.9 377.6 L835.1 381.1 L841.3 385.3 L847.5 390.2 L853.5 395.8 L859.3 401.9 L865.0 408.6 L870.5 415.9 L875.8 423.7 L880.9 432.0 L885.6 440.7 L890.1 449.9 L894.3 459.4 L898.2 469.3 L901.7 479.4 L904.8 489.8 L907.6 500.4 L910.0 511.1 L912.0 521.9 L913.6 532.8 L914.8 543.7 L915.6 554.5 L915.9 565.2 L915.8 575.8 L915.4 586.2 L914.4 596.3 L913.1 606.2 L911.4 615.8 L909.2 624.9 L906.7 633.7 L903.8 642.0 L900.5 649.9 L896.9 657.2 L892.9 663.9 L888.6 670.1 L884.1 675.7 L879.2 680.6 L874.1 684.8 L868.7 688.4 L863.1 691.3 L857.4 693.5 L851.5 695.0" fill="none" stroke="#141414" stroke-width="1.5"/>
<path d="M796.4 370.3 L802.5 369.6 L808.6 369.5 L814.9 370.2 L821.2 371.7 L827.5 373.8 L833.8 376.7 L840.1 380.2 L846.3 384.4 L852.4 389.3 L858.4 394.9 L864.3 401.0 L870.0 407.7 L875.5 415.0 L880.8 422.8 L885.8 431.1 L890.6 439.8 L895.1 449.0 L899.3 458.5 L903.1 468.4 L906.6 478.5 L909.8 488.9 L912.6 499.5 L915.0 510.2 L917.0 521.0 L918.6 531.9 L919.7 542.8 L920.5 553.6 L920.9 564.3 L920.8 574.9 L920.3 585.3 L919.4 595.4 L918.1 605.3 L916.3 614.9 L914.2 624.0 L911.7 632.8 L908.7 641.1 L905.5 648.9 L901.8 656.3 L897.9 663.0 L893.6 669.2 L889.0 674.7 L884.1 679.7 L879.0 683.9 L873.6 687.5 L868.1 690.4 L862.3 692.6 L856.4 694.1" fill="none" stroke="#141414" stroke-width="1.5"/>
<path d="M806.5 368.5 L812.5 367.7 L818.7 367.7 L824.9 368.4 L831.2 369.8 L837.5 372.0 L843.9 374.8 L850.1 378.4 L856.3 382.6 L862.5 387.5 L868.5 393.0 L874.4 399.2 L880.1 405.9 L885.6 413.2 L890.8 421.0 L895.9 429.2 L900.7 438.0 L905.2 447.1 L909.3 456.7 L913.2 466.5 L916.7 476.7 L919.9 487.0 L922.7 497.6 L925.1 508.3 L927.1 519.2 L928.7 530.0 L929.8 540.9 L930.6 551.7 L931.0 562.4 L930.9 573.0 L930.4 583.4 L929.5 593.6 L928.1 603.5 L926.4 613.0 L924.3 622.2 L921.7 630.9 L918.8 639.3 L915.5 647.1 L911.9 654.4 L907.9 661.2 L903.6 667.3 L899.0 672.9 L894.2 677.8 L889.0 682.1 L883.7 685.7 L878.1 688.6 L872.3 690.7 L866.4 692.2 L871.3 691.3 L877.3 689.8 L883.0 687.7 L888.6 684.8 L894.0 681.2 L899.1 676.9 L904.0 672.0 L908.6 666.4 L912.9 660.3 L916.8 653.5 L920.5 646.2 L923.8 638.4 L926.7 630.0 L929.2 621.3 L931.3 612.1 L933.1 602.5 L934.4 592.7 L935.3 582.5 L935.8 572.1 L935.9 561.5 L935.6 550.8 L934.8 540.0 L933.6 529.1 L932.0 518.3 L930.0 507.4 L927.6 496.7 L924.8 486.1 L921.7 475.8 L918.1 465.6 L914.3 455.8 L910.1 446.2 L905.6 437.1 L900.8 428.3 L895.8 420.1 L890.5 412.3 L885.0 405.0 L879.3 398.3 L873.4 392.1 L867.4 386.6 L861.3 381.7 L855.1 377.5 L848.8 373.9 L842.5 371.1 L836.1 368.9 L829.9 367.5 L823.6 366.8 L817.4 366.8 L811.4 367.6 Z" fill="url(#gp)" stroke="none"/>
<path d="M806.5 368.5 L812.5 367.7 L818.7 367.7 L824.9 368.4 L831.2 369.8 L837.5 372.0 L843.9 374.8 L850.1 378.4 L856.3 382.6 L862.5 387.5 L868.5 393.0 L874.4 399.2 L880.1 405.9 L885.6 413.2 L890.8 421.0 L895.9 429.2 L900.7 438.0 L905.2 447.1 L909.3 456.7 L913.2 466.5 L916.7 476.7 L919.9 487.0 L922.7 497.6 L925.1 508.3 L927.1 519.2 L928.7 530.0 L929.8 540.9 L930.6 551.7 L931.0 562.4 L930.9 573.0 L930.4 583.4 L929.5 593.6 L928.1 603.5 L926.4 613.0 L924.3 622.2 L921.7 630.9 L918.8 639.3 L915.5 647.1 L911.9 654.4 L907.9 661.2 L903.6 667.3 L899.0 672.9 L894.2 677.8 L889.0 682.1 L883.7 685.7 L878.1 688.6 L872.3 690.7 L866.4 692.2" fill="none" stroke="#141414" stroke-width="1.5"/>
<path d="M811.4 367.6 L817.4 366.8 L823.6 366.8 L829.9 367.5 L836.1 368.9 L842.5 371.1 L848.8 373.9 L855.1 377.5 L861.3 381.7 L867.4 386.6 L873.4 392.1 L879.3 398.3 L885.0 405.0 L890.5 412.3 L895.8 420.1 L900.8 428.3 L905.6 437.1 L910.1 446.2 L914.3 455.8 L918.1 465.6 L921.7 475.8 L924.8 486.1 L927.6 496.7 L930.0 507.4 L932.0 518.3 L933.6 529.1 L934.8 540.0 L935.6 550.8 L935.9 561.5 L935.8 572.1 L935.3 582.5 L934.4 592.7 L933.1 602.5 L931.3 612.1 L929.2 621.3 L926.7 630.0 L923.8 638.4 L920.5 646.2 L916.8 653.5 L912.9 660.3 L908.6 666.4 L904.0 672.0 L899.1 676.9 L894.0 681.2 L888.6 684.8 L883.0 687.7 L877.3 689.8 L871.3 691.3" fill="none" stroke="#141414" stroke-width="1.5"/>
<path d="M821.4 365.7 L827.5 365.0 L833.7 365.0 L839.9 365.7 L846.2 367.1 L852.5 369.2 L858.8 372.1 L865.1 375.6 L871.3 379.9 L877.5 384.8 L883.5 390.3 L889.4 396.4 L895.1 403.1 L900.6 410.4 L905.9 418.2 L910.9 426.5 L915.7 435.2 L920.2 444.4 L924.4 453.9 L928.2 463.8 L931.8 473.9 L934.9 484.3 L937.7 494.9 L940.1 505.6 L942.1 516.4 L943.7 527.3 L944.9 538.1 L945.7 549.0 L946.0 559.7 L945.9 570.3 L945.4 580.7 L944.5 590.8 L943.2 600.7 L941.4 610.2 L939.3 619.4 L936.7 628.2 L933.8 636.5 L930.5 644.3 L926.9 651.6 L922.9 658.4 L918.6 664.6 L914.0 670.1 L909.1 675.1 L904.0 679.3 L898.6 682.9 L893.1 685.8 L887.3 688.0 L881.4 689.5 L886.3 688.6 L892.2 687.1 L898.0 684.9 L903.6 682.0 L908.9 678.4 L914.1 674.1 L919.0 669.2 L923.6 663.7 L927.9 657.5 L931.8 650.7 L935.5 643.4 L938.8 635.6 L941.7 627.3 L944.2 618.5 L946.4 609.3 L948.1 599.8 L949.5 589.9 L950.4 579.8 L950.9 569.4 L950.9 558.8 L950.6 548.0 L949.8 537.2 L948.7 526.4 L947.1 515.5 L945.1 504.7 L942.7 494.0 L939.9 483.4 L936.7 473.0 L933.2 462.9 L929.3 453.0 L925.1 443.5 L920.7 434.3 L915.9 425.6 L910.8 417.3 L905.5 409.5 L900.0 402.2 L894.3 395.5 L888.4 389.4 L882.4 383.8 L876.3 379.0 L870.1 374.7 L863.8 371.2 L857.5 368.3 L851.1 366.2 L844.8 364.8 L838.6 364.1 L832.4 364.1 L826.3 364.8 Z" fill="url(#gp)" stroke="none"/>
<path d="M821.4 365.7 L827.5 365.0 L833.7 365.0 L839.9 365.7 L846.2 367.1 L852.5 369.2 L858.8 372.1 L865.1 375.6 L871.3 379.9 L877.5 384.8 L883.5 390.3 L889.4 396.4 L895.1 403.1 L900.6 410.4 L905.9 418.2 L910.9 426.5 L915.7 435.2 L920.2 444.4 L924.4 453.9 L928.2 463.8 L931.8 473.9 L934.9 484.3 L937.7 494.9 L940.1 505.6 L942.1 516.4 L943.7 527.3 L944.9 538.1 L945.7 549.0 L946.0 559.7 L945.9 570.3 L945.4 580.7 L944.5 590.8 L943.2 600.7 L941.4 610.2 L939.3 619.4 L936.7 628.2 L933.8 636.5 L930.5 644.3 L926.9 651.6 L922.9 658.4 L918.6 664.6 L914.0 670.1 L909.1 675.1 L904.0 679.3 L898.6 682.9 L893.1 685.8 L887.3 688.0 L881.4 689.5" fill="none" stroke="#141414" stroke-width="1.5"/>
<path d="M826.3 364.8 L832.4 364.1 L838.6 364.1 L844.8 364.8 L851.1 366.2 L857.5 368.3 L863.8 371.2 L870.1 374.7 L876.3 379.0 L882.4 383.8 L888.4 389.4 L894.3 395.5 L900.0 402.2 L905.5 409.5 L910.8 417.3 L915.9 425.6 L920.7 434.3 L925.1 443.5 L929.3 453.0 L933.2 462.9 L936.7 473.0 L939.9 483.4 L942.7 494.0 L945.1 504.7 L947.1 515.5 L948.7 526.4 L949.8 537.2 L950.6 548.0 L950.9 558.8 L950.9 569.4 L950.4 579.8 L949.5 589.9 L948.1 599.8 L946.4 609.3 L944.2 618.5 L941.7 627.3 L938.8 635.6 L935.5 643.4 L931.8 650.7 L927.9 657.5 L923.6 663.7 L919.0 669.2 L914.1 674.1 L908.9 678.4 L903.6 682.0 L898.0 684.9 L892.2 687.1 L886.3 688.6" fill="none" stroke="#141414" stroke-width="1.5"/>
<path d="M834.2 363.4 L840.3 362.7 L846.4 362.6 L852.7 363.3 L859.0 364.8 L865.3 366.9 L871.7 369.8 L877.9 373.3 L884.2 377.5 L890.3 382.4 L896.3 387.9 L902.2 394.1 L907.9 400.8 L913.4 408.1 L918.7 415.9 L923.8 424.1 L928.6 432.9 L933.1 442.0 L937.2 451.6 L941.1 461.4 L944.6 471.6 L947.8 481.9 L950.6 492.5 L953.0 503.2 L955.0 514.0 L956.6 524.9 L957.7 535.8 L958.5 546.6 L958.9 557.3 L958.8 567.9 L958.3 578.3 L957.4 588.5 L956.0 598.3 L954.3 607.9 L952.1 617.1 L949.6 625.8 L946.7 634.1 L943.4 642.0 L939.7 649.3 L935.7 656.0 L931.4 662.2 L926.8 667.8 L921.9 672.7 L916.8 677.0 L911.4 680.6 L905.8 683.4 L900.1 685.6 L894.1 687.1 L898.3 686.3 L904.2 684.9 L910.0 682.7 L915.6 679.8 L920.9 676.2 L926.1 671.9 L931.0 667.0 L935.6 661.4 L939.9 655.3 L943.9 648.5 L947.5 641.2 L950.8 633.4 L953.7 625.1 L956.3 616.3 L958.4 607.1 L960.2 597.6 L961.5 587.7 L962.4 577.5 L962.9 567.1 L963.0 556.6 L962.7 545.8 L961.9 535.0 L960.7 524.1 L959.1 513.3 L957.1 502.5 L954.7 491.7 L951.9 481.2 L948.8 470.8 L945.3 460.7 L941.4 450.8 L937.2 441.3 L932.7 432.1 L927.9 423.4 L922.9 415.1 L917.6 407.3 L912.1 400.0 L906.4 393.3 L900.5 387.2 L894.5 381.6 L888.3 376.8 L882.1 372.5 L875.8 369.0 L869.5 366.1 L863.1 364.0 L856.8 362.6 L850.6 361.9 L844.4 361.9 L838.3 362.7 Z" fill="url(#gp)" stroke="none"/>
<path d="M834.2 363.4 L840.3 362.7 L846.4 362.6 L852.7 363.3 L859.0 364.8 L865.3 366.9 L871.7 369.8 L877.9 373.3 L884.2 377.5 L890.3 382.4 L896.3 387.9 L902.2 394.1 L907.9 400.8 L913.4 408.1 L918.7 415.9 L923.8 424.1 L928.6 432.9 L933.1 442.0 L937.2 451.6 L941.1 461.4 L944.6 471.6 L947.8 481.9 L950.6 492.5 L953.0 503.2 L955.0 514.0 L956.6 524.9 L957.7 535.8 L958.5 546.6 L958.9 557.3 L958.8 567.9 L958.3 578.3 L957.4 588.5 L956.0 598.3 L954.3 607.9 L952.1 617.1 L949.6 625.8 L946.7 634.1 L943.4 642.0 L939.7 649.3 L935.7 656.0 L931.4 662.2 L926.8 667.8 L921.9 672.7 L916.8 677.0 L911.4 680.6 L905.8 683.4 L900.1 685.6 L894.1 687.1" fill="none" stroke="#141414" stroke-width="1.5"/>
<path d="M838.3 362.7 L844.4 361.9 L850.6 361.9 L856.8 362.6 L863.1 364.0 L869.5 366.1 L875.8 369.0 L882.1 372.5 L888.3 376.8 L894.5 381.6 L900.5 387.2 L906.4 393.3 L912.1 400.0 L917.6 407.3 L922.9 415.1 L927.9 423.4 L932.7 432.1 L937.2 441.3 L941.4 450.8 L945.3 460.7 L948.8 470.8 L951.9 481.2 L954.7 491.7 L957.1 502.5 L959.1 513.3 L960.7 524.1 L961.9 535.0 L962.7 545.8 L963.0 556.6 L962.9 567.1 L962.4 577.5 L961.5 587.7 L960.2 597.6 L958.4 607.1 L956.3 616.3 L953.7 625.1 L950.8 633.4 L947.5 641.2 L943.9 648.5 L939.9 655.3 L935.6 661.4 L931.0 667.0 L926.1 671.9 L920.9 676.2 L915.6 679.8 L910.0 682.7 L904.2 684.9 L898.3 686.3" fill="none" stroke="#161616" stroke-width="1.2"/>
<path d="M711.3 553.2 L713.1 563.9 L714.5 574.7 L715.5 585.4 L716.1 596.1 L716.3 606.7 L716.0 617.1 L715.4 627.2 L714.4 637.2 L712.9 646.8 L711.1 656.1 L708.9 665.1 L706.3 673.6 L703.4 681.6 L700.1 689.2 L696.4 696.2 L692.5 702.7 L688.2 708.6 L683.6 713.9 L678.8 718.6 L673.8 722.6 L668.5 725.9 L663.0 728.6 L657.3 730.5 L651.5 731.8 L645.6 732.3 L639.6 732.2 L633.5 731.3 L627.3 729.7 L621.2 727.4 L615.0 724.5 L608.9 720.8 L602.8 716.5 L596.8 711.5 L591.0 706.0 L585.3 699.8 L579.7 693.1 L574.4 685.8 L569.2 678.0 L564.3 669.7 L559.6 661.0 L555.2 651.9 L551.2 642.4 L547.4 632.6 L543.9 622.6 L540.8 612.3 L538.1 601.8 L535.7 591.2 L533.8 580.5 L532.2 569.7 L531.0 559.0 L530.2 548.2 L529.8 537.6 L529.8 527.1 L530.2 516.8 L531.1 506.8 L532.3 497.0 L533.9 487.5 L536.0 478.4 L538.4 469.6 L541.1 461.4 L544.3 453.5 L547.7 446.2 L551.5 439.5 L555.6 433.3 L560.1 427.7 L564.7 422.7 L569.7 418.3 L574.9 414.7 L580.2 411.7 L585.8 409.4 L591.5 407.7 L597.4 406.8 L603.4 406.7 L609.5 407.2 L615.6 408.4 L621.8 410.3 L627.9 413.0 L634.1 416.3 L640.2 420.3 L646.2 424.9 L652.1 430.2 L657.9 436.0 L663.5 442.5 L669.0 449.5 L674.3 457.1 L679.3 465.1 L684.1 473.6 L688.6 482.5 L692.8 491.8 L696.8 501.4 L700.4 511.3 L703.7 521.5 L706.6 531.9 L709.1 542.5 L711.3 553.2 Z" fill="#b9b9b9" stroke="#161616" stroke-width="1.2"/>
<path d="M506.3 505.2 L575.2 491.4 L661.5 503.5 L592.7 517.1 Z" fill="#d8d8d8" stroke="#161616" stroke-width="1.250" stroke-linejoin="round"/>
<path d="M506.3 505.2 L592.7 517.1 L585.2 523.6 L505.9 512.7 Z" fill="#ececec" stroke="#161616" stroke-width="1.250" stroke-linejoin="round"/>
<path d="M505.9 512.7 L585.2 523.6 L596.2 659.7 L518.0 648.5 Z" fill="#b9b9b9" stroke="#161616" stroke-width="1.250" stroke-linejoin="round"/>
<path d="M585.2 523.6 L592.7 517.1 L604.8 665.0 L596.2 659.7 Z" fill="#a8a8a8" stroke="#161616" stroke-width="1.250" stroke-linejoin="round"/>
<path d="M592.7 517.1 L661.5 503.5 L673.6 652.0 L604.8 665.0 Z" fill="#918794" stroke="#161616" stroke-width="1.250" stroke-linejoin="round"/>
<path d="M518.0 648.5 L596.2 659.7 L604.8 665.0 L519.2 651.5 Z" fill="#6c6c6c" stroke="#161616" stroke-width="1.250" stroke-linejoin="round"/>
</svg>
<!-- right task pane tabs -->
<div class="abs" style="left:1572px;top:177px;width:26px;height:168px;background:#d6d6d6;border:1px solid #8c8c8c;border-right:none"></div>
<div class="abs" style="left:1573px;top:272px;width:25px;height:24px;background:#f6f6f6"></div>
<div class="abs" style="left:1573px;top:200px;width:25px;height:1px;background:#8c8c8c"></div>
<div class="abs" style="left:1573px;top:224px;width:25px;height:1px;background:#8c8c8c"></div>
<div class="abs" style="left:1573px;top:248px;width:25px;height:1px;background:#8c8c8c"></div>
<div class="abs" style="left:1573px;top:272px;width:25px;height:1px;background:#8c8c8c"></div>
<div class="abs" style="left:1573px;top:296px;width:25px;height:1px;background:#8c8c8c"></div>
<div class="abs" style="left:1573px;top:320px;width:25px;height:1px;background:#8c8c8c"></div>
<svg class="abs" style="left:1574px;top:177px" width="22" height="168" viewBox="0 0 22 168">
 <!-- home -->
 <g transform="translate(0,1.500)"><path d="M2 10.600 L11 2.400 L20 10.600" fill="none" stroke="#1b5d88" stroke-width="2.200" stroke-linejoin="round"/>
 <path d="M4.600 10.600 L11 5 L17.400 10.600 V18.800 H4.600 Z" fill="#f7f7f7" stroke="#333" stroke-width="1"/><rect x="9.200" y="12.600" width="3.800" height="6.200" fill="#fff" stroke="#333" stroke-width=".9"/></g>
 <!-- library books -->
 <g transform="translate(0,24)" stroke="#333" stroke-width=".9" stroke-linejoin="round"><path d="M4.200 5.400 L8.800 8 V20.400 L4.200 16.600 Z" fill="#f4f4f4"/><path d="M8.800 8 L11.800 6.600 V19 L8.800 20.400 Z M11.800 6.600 L14.800 5.200 V17.600 L11.800 19 Z M14.800 5.200 L18 3.800 V16 L14.800 17.600 Z" fill="#e2e2e2"/><path d="M4.200 5.400 L8.800 8 L11.800 6.600 L7.200 4 Z M7.200 4 L11.800 6.600 L14.800 5.200 L10.200 2.600 Z M10.200 2.600 L14.800 5.200 L18 3.800 L13.400 1.200 Z" fill="#fafafa"/></g>
 <!-- folder -->
 <g transform="translate(0,48)"><path d="M2 4.600 H8 L9.600 6.400 H17.400 V9.400 H2 Z" fill="#e4e4e4" stroke="#444" stroke-width="1" stroke-linejoin="round"/><path d="M2 19 V4.600 M2 19 L5.600 9.400 H21 L17.400 19 Z" fill="#f5f5f5" stroke="#444" stroke-width="1" stroke-linejoin="round"/></g>
 <!-- view palette -->
 <g transform="translate(0,72)"><rect x="3.400" y="3.400" width="16.400" height="15.400" rx="1.200" fill="#f2f2f2" stroke="#333" stroke-width="1.100"/><path d="M5.600 6 H13 V8.600 H10.600 V11.600 H14 V15.600 H5.600 V11.600 H8 V8.600 H5.600 Z" fill="#3f97cb" stroke="#134d73" stroke-width=".9"/><rect x="15" y="5.600" width="2.800" height="2.800" fill="#3f97cb" stroke="#134d73" stroke-width=".8"/><rect x="16" y="11" width="2.200" height="5.600" fill="#9a9a9a" stroke="#444" stroke-width=".7"/></g>
 <!-- appearances ball -->
 <g transform="translate(0,96)"><circle cx="11.600" cy="12" r="8" fill="#d93a3a"/><path d="M11.600 12 L13 4.100 A8 8 0 0 0 3.700 13.400 Z" fill="#3d74d8"/><path d="M11.600 12 L3.700 13.400 A8 8 0 0 0 12.600 19.900 Z" fill="#49a83c"/><path d="M11.600 12 L12.600 19.900 A8 8 0 0 0 19.500 13 Z" fill="#e6b93a"/><ellipse cx="9.400" cy="7.800" rx="4" ry="2.600" fill="#fff" opacity=".5"/><circle cx="11.600" cy="12" r="8" fill="none" stroke="#6a4a3a" stroke-width=".6" opacity=".6"/></g>
 <!-- custom properties -->
 <g transform="translate(0,120)"><rect x="3.400" y="3.400" width="16.400" height="16" rx="1.200" fill="#f4f4f4" stroke="#333" stroke-width="1.100"/><rect x="3.400" y="3.400" width="16.400" height="3.400" fill="#3f97cb" stroke="#134d73" stroke-width=".9"/><g fill="#3f97cb" stroke="#134d73" stroke-width=".8"><rect x="5.600" y="8.600" width="3.600" height="2.200"/><rect x="5.600" y="12.200" width="3.600" height="2.200"/><rect x="5.600" y="15.800" width="3.600" height="2.200"/></g><path d="M11 9.800 H18 M11 13.400 H18 M11 17 H18" stroke="#222" stroke-width="1"/></g>
 <!-- forum -->
 <g transform="translate(0,144)"><path d="M3.400 3.800 H14 Q14.600 3.800 14.600 4.400 V11 Q14.600 11.600 14 11.600 H7.600 L5 14.400 V11.600 H4 Q3.400 11.600 3.400 11 Z" fill="#4aa0d0" stroke="#134d73" stroke-width="1" stroke-linejoin="round"/><path d="M10.600 8 H19.400 Q20 8 20 8.600 V14 Q20 14.600 19.400 14.600 H18.600 V17.400 L16 14.600 H10.600 Q10 14.600 10 14 V8.600 Q10 8 10.600 8 Z" fill="#f4f4f4" stroke="#333" stroke-width="1" stroke-linejoin="round"/></g>
</svg>
<!-- origin triad -->
<svg class="abs" style="left:2px;top:798px" width="60" height="50" viewBox="0 0 60 50">
 <path d="M34 8.800 C28 8.400 22 9.600 16 11.400" fill="none" stroke="#2c7a2c" stroke-width="3.600"/>
 <path d="M8.400 12.400 L18 7.600 L19 15.600 Z" fill="#1f9a1f"/>
 <path d="M33 8 H46" stroke="#a02020" stroke-width="4"/><path d="M42.400 6 L46.800 4.800 L50.800 9.400 L46.800 13.800 L42.400 12.600 Z" fill="#c81e1e"/>
 <path d="M35.200 9 V32" stroke="#2a2ad0" stroke-width="3.600"/><path d="M31 28 H39.600 L35.400 38.600 Z" fill="#1a1ac0"/>
 <text x="2" y="17" font-family="'Liberation Serif',serif" font-size="12" font-weight="bold" fill="#1a8a1a" textLength="6" lengthAdjust="spacingAndGlyphs">Y</text>
 <text x="48.500" y="13.500" font-family="'Liberation Serif',serif" font-size="12" font-weight="bold" fill="#e01010" textLength="6" lengthAdjust="spacingAndGlyphs">X</text>
 <text x="32.500" y="47.400" font-family="'Liberation Serif',serif" font-size="12" font-weight="bold" fill="#1a1ae0" textLength="6" lengthAdjust="spacingAndGlyphs">Z</text>
</svg>
<div id="btabs">
 <div class="abs" style="left:0;top:0;width:65px;height:15px;background:#b4b4b4;border-top:1px solid #555"></div>
 <svg class="abs" style="left:0;top:1px" width="65" height="14" viewBox="0 0 65 14"><g fill="#9a9a9a"><path d="M3 2 h1.600 v10 h-1.600 z M11 2 v10 l-6 -5 z M26 2 v10 l-6 -5 z M38 2 v10 l6 -5 z M53 2 v10 l6 -5 z M60 2 h1.600 v10 h-1.600 z"/></g><path d="M16.500 0 V14 M32.500 0 V14 M48.500 0 V14 M64.500 0 V14" stroke="#9c9c9c" stroke-width="1"/></svg>
 <div class="abs" style="left:67px;top:0;width:45px;height:16px;background:#f7f7f7;color:#222;text-align:center;line-height:15px;border-right:1px solid #8a8a8a">模型</div>
 <div class="abs" style="left:112px;top:0;width:56px;height:15px;background:#d3d3d3;color:#222;text-align:center;line-height:14px;border-right:1px solid #8a8a8a;border-bottom:1px solid #8a8a8a;white-space:nowrap;letter-spacing:-.3px">3D 视图</div>
 <div class="abs" style="left:168px;top:0;width:77px;height:15px;background:#d3d3d3;color:#222;text-align:center;line-height:14px;border-right:1px solid #8a8a8a;border-bottom:1px solid #8a8a8a;white-space:nowrap;letter-spacing:-.3px">运动算例 1</div>
</div>
<div id="status">
 <div class="abs" style="left:0;top:5px;white-space:nowrap;color:#333;font-size:12px;letter-spacing:.2px">SOLIDWORKS Premium 2016 x64 版</div>
 <div class="abs" style="left:1302px;top:1px;width:1px;height:15px;background:#c9c9c9"></div>
 <div class="abs" style="left:1384px;top:1px;width:1px;height:15px;background:#c9c9c9"></div>
 <div class="abs" style="left:1400px;top:1px;width:1px;height:15px;background:#c9c9c9"></div>
 <div class="abs" style="left:1313px;top:5px;white-space:nowrap;color:#333;font-size:12px">在编辑 零件</div>
 <div class="abs" style="left:1431px;top:5px;white-space:nowrap;color:#333;font-size:12px">自定义</div>
</div>
<div id="deskb"></div>
<!-- watermark -->
<svg class="abs" style="left:1376px;top:876px" width="222" height="24" viewBox="0 0 222 24">
 <g font-family="'Liberation Sans','Noto Sans CJK SC',sans-serif" font-weight="bold" fill="#ffffff" stroke="#ee1c25" stroke-width=".85" stroke-linejoin="round">
  <text x="3" y="15.500" font-size="14.500" textLength="51" lengthAdjust="spacingAndGlyphs">三维网</text>
  <text x="55" y="15" font-size="13.500" textLength="147" lengthAdjust="spacingAndGlyphs">www.3dportal.cn</text>
 </g>
 <g transform="translate(203,4)"><path d="M1 9 L8 1.600 L13.600 2 L14 7.600 L7 14.600 Z" fill="#f2c12e" stroke="#8a6a10" stroke-width="1" stroke-linejoin="round"/><circle cx="11" cy="4.600" r="1.300" fill="#fff" stroke="#8a6a10" stroke-width=".6"/><path d="M4 9 L7 12 M5.600 7.400 L8.600 10.400" stroke="#b98f18" stroke-width=".8"/></g>
</svg>
<!-- red annotation ellipse -->
<svg class="abs" style="left:0;top:0" width="1598" height="160" viewBox="0 0 1598 160"><ellipse cx="548.500" cy="74.400" rx="112" ry="68" fill="none" stroke="#ed1c24" stroke-width="5"/></svg>
</body>
</html>
